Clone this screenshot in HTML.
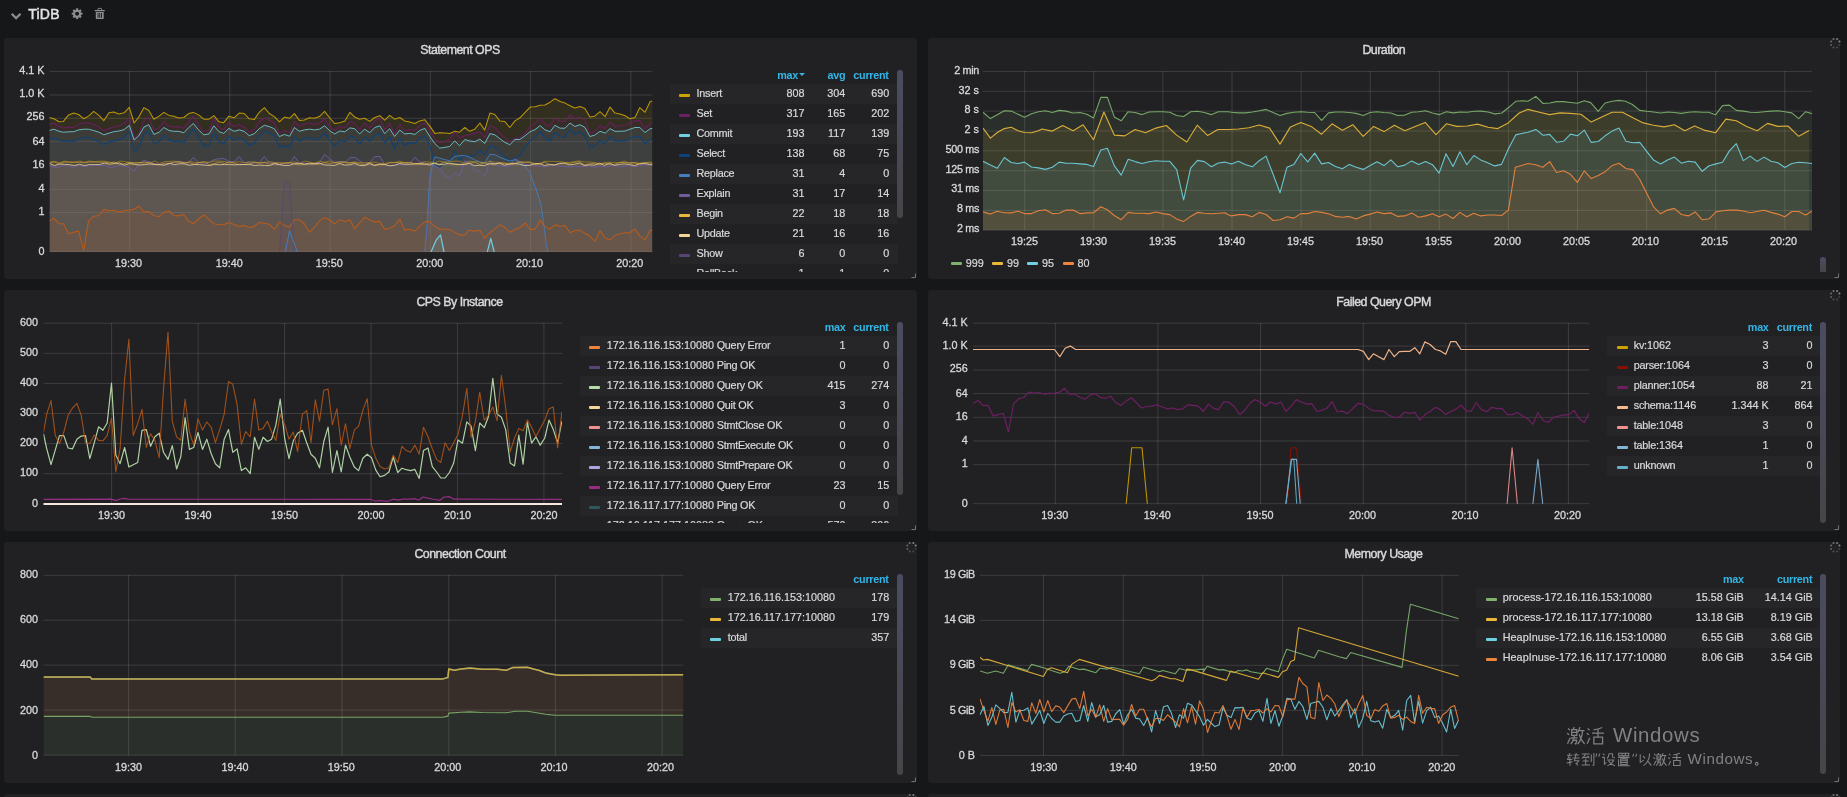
<!DOCTYPE html>
<html><head><meta charset="utf-8"><title>TiDB</title>
<style>
html,body{margin:0;padding:0;background:#161719;}
body{width:1847px;height:797px;overflow:hidden;position:relative;font-family:"Liberation Sans", sans-serif;color:#d8d9da;}
.panel{position:absolute;background:#212124;border-radius:3px;}
#root{position:absolute;left:0;top:0;width:1847px;height:797px;will-change:transform;}
svg.main{position:absolute;left:0;top:0;}
.ax{font-family:"Liberation Sans", sans-serif;font-size:10.8px;fill:#d8d9da;stroke:#d8d9da;stroke-width:0.3px;}
.axl{letter-spacing:-0.33px;}
.ttl{font-family:"Liberation Sans", sans-serif;font-size:12.4px;fill:#d8d9da;letter-spacing:-0.5px;stroke:#d8d9da;stroke-width:0.4px;}
.lh{position:absolute;font-size:10.8px;font-weight:bold;color:#33b5e5;line-height:14px;white-space:nowrap;letter-spacing:-0.28px;}
.caret{display:inline-block;width:0;height:0;border-left:3px solid transparent;border-right:3px solid transparent;border-top:3.5px solid #33b5e5;margin-left:0.5px;vertical-align:3px;}
.lg{position:absolute;overflow:hidden;}
.lr{position:absolute;left:0;right:0;height:20px;font-size:10.8px;line-height:18px;white-space:nowrap;-webkit-text-stroke:0.2px #d8d9da;}
.lr.alt{background:#262628;}
.lr i{position:absolute;top:10px;width:11px;height:3px;border-radius:1px;}
.ll{position:absolute;top:0;letter-spacing:-0.25px;}
.ll b{font-weight:normal;letter-spacing:0;}
.lv{position:absolute;top:0;}
.chip{position:absolute;width:11px;height:3px;border-radius:1px;}
.bl{position:absolute;font-size:10.8px;line-height:18px;white-space:nowrap;-webkit-text-stroke:0.2px #d8d9da;}
.sb{position:absolute;width:5.4px;border-radius:3px;background:linear-gradient(to bottom,#4b4c61,#454549);}
.hdr{position:absolute;left:28.3px;top:5px;font-size:14px;line-height:18px;color:#e3e3e3;letter-spacing:0.2px;-webkit-text-stroke:0.5px #e3e3e3;}
</style></head><body>
<div id="root"><div class="panel" style="left:4px;top:38px;width:913px;height:241px"></div><div class="panel" style="left:928px;top:38px;width:912px;height:241px"></div><div class="panel" style="left:4px;top:290px;width:913px;height:241px"></div><div class="panel" style="left:928px;top:290px;width:912px;height:241px"></div><div class="panel" style="left:4px;top:542px;width:913px;height:241px"></div><div class="panel" style="left:928px;top:542px;width:912px;height:241px"></div><div class="panel" style="left:4px;top:794px;width:913px;height:20px"></div><div class="panel" style="left:928px;top:794px;width:912px;height:20px"></div><svg class="main" width="1847" height="797" viewBox="0 0 1847 797"><path d="M915.5 273.5 v4 h-4" fill="none" stroke="#8e8e8e" stroke-width="1" opacity="0.75"/><path d="M1838.5 273.5 v4 h-4" fill="none" stroke="#8e8e8e" stroke-width="1" opacity="0.75"/><path d="M915.5 525.5 v4 h-4" fill="none" stroke="#8e8e8e" stroke-width="1" opacity="0.75"/><path d="M1838.5 525.5 v4 h-4" fill="none" stroke="#8e8e8e" stroke-width="1" opacity="0.75"/><path d="M915.5 777.5 v4 h-4" fill="none" stroke="#8e8e8e" stroke-width="1" opacity="0.75"/><path d="M1838.5 777.5 v4 h-4" fill="none" stroke="#8e8e8e" stroke-width="1" opacity="0.75"/><circle cx="1837.1" cy="39" r="1" fill="#9a9a9a" opacity="0.79"/><circle cx="1839.5" cy="41.4" r="1" fill="#9a9a9a" opacity="0.88"/><circle cx="1839.5" cy="45" r="1" fill="#9a9a9a" opacity="0.25"/><circle cx="1837.1" cy="47.4" r="1" fill="#9a9a9a" opacity="0.34"/><circle cx="1833.5" cy="47.4" r="1" fill="#9a9a9a" opacity="0.43"/><circle cx="1831.1" cy="45" r="1" fill="#9a9a9a" opacity="0.52"/><circle cx="1831.1" cy="41.4" r="1" fill="#9a9a9a" opacity="0.61"/><circle cx="1833.5" cy="39" r="1" fill="#9a9a9a" opacity="0.70"/><circle cx="1837.1" cy="291" r="1" fill="#9a9a9a" opacity="0.79"/><circle cx="1839.5" cy="293.4" r="1" fill="#9a9a9a" opacity="0.88"/><circle cx="1839.5" cy="297" r="1" fill="#9a9a9a" opacity="0.25"/><circle cx="1837.1" cy="299.4" r="1" fill="#9a9a9a" opacity="0.34"/><circle cx="1833.5" cy="299.4" r="1" fill="#9a9a9a" opacity="0.43"/><circle cx="1831.1" cy="297" r="1" fill="#9a9a9a" opacity="0.52"/><circle cx="1831.1" cy="293.4" r="1" fill="#9a9a9a" opacity="0.61"/><circle cx="1833.5" cy="291" r="1" fill="#9a9a9a" opacity="0.70"/><circle cx="913.3" cy="543" r="1" fill="#9a9a9a" opacity="0.79"/><circle cx="915.7" cy="545.4" r="1" fill="#9a9a9a" opacity="0.88"/><circle cx="915.7" cy="549" r="1" fill="#9a9a9a" opacity="0.25"/><circle cx="913.3" cy="551.4" r="1" fill="#9a9a9a" opacity="0.34"/><circle cx="909.7" cy="551.4" r="1" fill="#9a9a9a" opacity="0.43"/><circle cx="907.3" cy="549" r="1" fill="#9a9a9a" opacity="0.52"/><circle cx="907.3" cy="545.4" r="1" fill="#9a9a9a" opacity="0.61"/><circle cx="909.7" cy="543" r="1" fill="#9a9a9a" opacity="0.70"/><circle cx="1837.1" cy="543" r="1" fill="#9a9a9a" opacity="0.79"/><circle cx="1839.5" cy="545.4" r="1" fill="#9a9a9a" opacity="0.88"/><circle cx="1839.5" cy="549" r="1" fill="#9a9a9a" opacity="0.25"/><circle cx="1837.1" cy="551.4" r="1" fill="#9a9a9a" opacity="0.34"/><circle cx="1833.5" cy="551.4" r="1" fill="#9a9a9a" opacity="0.43"/><circle cx="1831.1" cy="549" r="1" fill="#9a9a9a" opacity="0.52"/><circle cx="1831.1" cy="545.4" r="1" fill="#9a9a9a" opacity="0.61"/><circle cx="1833.5" cy="543" r="1" fill="#9a9a9a" opacity="0.70"/><circle cx="913.3" cy="795" r="1" fill="#9a9a9a" opacity="0.79"/><circle cx="915.7" cy="797.4" r="1" fill="#9a9a9a" opacity="0.88"/><circle cx="915.7" cy="801" r="1" fill="#9a9a9a" opacity="0.25"/><circle cx="913.3" cy="803.4" r="1" fill="#9a9a9a" opacity="0.34"/><circle cx="909.7" cy="803.4" r="1" fill="#9a9a9a" opacity="0.43"/><circle cx="907.3" cy="801" r="1" fill="#9a9a9a" opacity="0.52"/><circle cx="907.3" cy="797.4" r="1" fill="#9a9a9a" opacity="0.61"/><circle cx="909.7" cy="795" r="1" fill="#9a9a9a" opacity="0.70"/><circle cx="1837.1" cy="795" r="1" fill="#9a9a9a" opacity="0.79"/><circle cx="1839.5" cy="797.4" r="1" fill="#9a9a9a" opacity="0.88"/><circle cx="1839.5" cy="801" r="1" fill="#9a9a9a" opacity="0.25"/><circle cx="1837.1" cy="803.4" r="1" fill="#9a9a9a" opacity="0.34"/><circle cx="1833.5" cy="803.4" r="1" fill="#9a9a9a" opacity="0.43"/><circle cx="1831.1" cy="801" r="1" fill="#9a9a9a" opacity="0.52"/><circle cx="1831.1" cy="797.4" r="1" fill="#9a9a9a" opacity="0.61"/><circle cx="1833.5" cy="795" r="1" fill="#9a9a9a" opacity="0.70"/><path d="M11.7 13.8 L16.1 18.2 L20.5 13.8" fill="none" stroke="#8e8e8e" stroke-width="2.3"/><g transform="translate(77.1,13.7)"><circle r="3" fill="none" stroke="#8e8e8e" stroke-width="2.1"/><rect x="-1.05" y="-5.4" width="2.1" height="2" fill="#8e8e8e" transform="rotate(0)"/><rect x="-1.05" y="-5.4" width="2.1" height="2" fill="#8e8e8e" transform="rotate(45)"/><rect x="-1.05" y="-5.4" width="2.1" height="2" fill="#8e8e8e" transform="rotate(90)"/><rect x="-1.05" y="-5.4" width="2.1" height="2" fill="#8e8e8e" transform="rotate(135)"/><rect x="-1.05" y="-5.4" width="2.1" height="2" fill="#8e8e8e" transform="rotate(180)"/><rect x="-1.05" y="-5.4" width="2.1" height="2" fill="#8e8e8e" transform="rotate(225)"/><rect x="-1.05" y="-5.4" width="2.1" height="2" fill="#8e8e8e" transform="rotate(270)"/><rect x="-1.05" y="-5.4" width="2.1" height="2" fill="#8e8e8e" transform="rotate(315)"/></g><g transform="translate(94.7,8)" fill="#8e8e8e"><rect x="0" y="1.9" width="10.1" height="1.4" rx="0.3"/><path d="M3.2 2.2 v-1 q0 -0.8 0.8 -0.8 h2.1 q0.8 0 0.8 0.8 v1" fill="none" stroke="#8e8e8e" stroke-width="1"/><path d="M1.1 3.9 h7.9 v6.3 q0 0.9 -0.9 0.9 h-6.1 q-0.9 0 -0.9 -0.9 z"/><rect x="2.9" y="4.9" width="0.9" height="4.9" fill="#161719"/><rect x="4.6" y="4.9" width="0.9" height="4.9" fill="#161719"/><rect x="6.3" y="4.9" width="0.9" height="4.9" fill="#161719"/></g><defs><clipPath id="c1"><rect x="49.5" y="71" width="603" height="181"/></clipPath></defs><rect x="49.5" y="70.9" width="603" height="1" fill="rgba(200,200,200,0.17)"/><rect x="49.5" y="94.5" width="603" height="1" fill="rgba(200,200,200,0.17)"/><rect x="49.5" y="117.8" width="603" height="1" fill="rgba(200,200,200,0.17)"/><rect x="49.5" y="141.2" width="603" height="1" fill="rgba(200,200,200,0.17)"/><rect x="49.5" y="164.6" width="603" height="1" fill="rgba(200,200,200,0.17)"/><rect x="49.5" y="188.8" width="603" height="1" fill="rgba(200,200,200,0.17)"/><rect x="49.5" y="212" width="603" height="1" fill="rgba(200,200,200,0.17)"/><rect x="49.5" y="251.2" width="603" height="1" fill="rgba(200,200,200,0.17)"/><rect x="129.1" y="71" width="1" height="181" fill="rgba(200,200,200,0.17)"/><rect x="229.3" y="71" width="1" height="181" fill="rgba(200,200,200,0.17)"/><rect x="329.6" y="71" width="1" height="181" fill="rgba(200,200,200,0.17)"/><rect x="429.8" y="71" width="1" height="181" fill="rgba(200,200,200,0.17)"/><rect x="529.9" y="71" width="1" height="181" fill="rgba(200,200,200,0.17)"/><rect x="630.4" y="71" width="1" height="181" fill="rgba(200,200,200,0.17)"/><text x="460" y="54.4" text-anchor="middle" class="ttl">Statement OPS</text><text x="44.5" y="74" text-anchor="end" class="ax">4.1 K</text><text x="44.5" y="96.9" text-anchor="end" class="ax">1.0 K</text><text x="44.5" y="119.9" text-anchor="end" class="ax">256</text><text x="44.5" y="144.9" text-anchor="end" class="ax">64</text><text x="44.5" y="167.8" text-anchor="end" class="ax">16</text><text x="44.5" y="192.2" text-anchor="end" class="ax">4</text><text x="44.5" y="214.8" text-anchor="end" class="ax">1</text><text x="44.5" y="254.9" text-anchor="end" class="ax">0</text><text x="128.4" y="267.2" text-anchor="middle" class="ax">19:30</text><text x="229.2" y="267.2" text-anchor="middle" class="ax">19:40</text><text x="329.3" y="267.2" text-anchor="middle" class="ax">19:50</text><text x="429.8" y="267.2" text-anchor="middle" class="ax">20:00</text><text x="529.6" y="267.2" text-anchor="middle" class="ax">20:10</text><text x="629.7" y="267.2" text-anchor="middle" class="ax">20:20</text><g clip-path="url(#c1)"><polygon points="49.2,117.5 53.9,118.8 59.1,121.8 63.4,121.4 68.6,114.9 73.8,113.1 78.5,114.5 83.7,118.7 88.5,116.1 93.7,111.4 98.9,115.4 103.8,120.6 109,112.8 113.7,111.9 118.9,114 124.1,112.8 129.3,107.4 134.1,123 138.8,117.1 144,107.6 148.8,110.5 153.9,119.2 159.1,116.1 163.9,112.4 169.1,115.4 173.8,116.2 178.6,118 183.8,117.5 188.7,113.6 193.4,112.4 198.6,114.9 203.8,119.2 209,119.2 213.8,115.7 219,121.8 223.7,122.7 228.9,116.2 234.1,117.8 239.3,113.1 244.2,113.5 249.2,118.8 254.4,119.4 259.2,112.3 264.4,107.6 269.3,113.5 274.3,116.6 279.5,121.8 284.4,117.1 289.6,118.3 294.4,113.6 299.4,120.4 304.3,120.1 309.5,117.8 314.4,118.3 319.4,116.6 324.6,111.4 329.4,117.5 334.6,123.5 339.8,122.7 344.9,120.9 349.9,112.3 354.7,117.1 359.6,119.2 364.6,118.3 369.8,121.4 374.7,117.5 379.9,115.7 384.7,120.1 389.7,115.4 394.6,119.2 399.8,117.5 404.6,120.9 409.7,122.1 414.9,123.5 419.7,120.9 424.9,119.7 429.8,126.1 434.8,133.4 439.7,132.7 444.9,133.1 449.7,133.6 454.7,131.3 459.6,132.2 464.8,127.5 469.6,131.3 474.8,129.2 479.9,123 484.7,130.1 489.9,113.1 494.8,114.5 499.8,120.9 504.6,121.4 509.8,127.5 515,120.9 519.9,117.8 525.1,112.3 530.1,107.1 535,106.7 540.2,105.3 545,105 550.1,102.2 554.9,98.7 560.1,101.5 565,103.1 570,105.7 574.8,107.9 580,106.5 584.9,108.4 589.9,116.9 594.8,116.2 600,111.7 605.2,116.6 610,107.1 615,113.1 619.9,114 625.1,115.7 629.9,118.7 635,117.5 639.8,107.6 645,112.3 650.2,101.5 652.5,101 652.5,252 49.2,252" fill="#CCA300" fill-opacity="0.1" stroke="none"/><polygon points="49.2,124.4 53.9,123 59.1,126.5 63.4,127.9 68.6,127.3 73.8,127.5 78.5,124.4 83.7,123 88.5,122.7 93.7,124.4 98.9,127 103.8,130.8 109,128.4 113.7,127 118.9,125.8 124.1,123.5 129.3,117.5 134.1,138.3 138.8,133.9 144,120.6 148.8,117.1 153.9,129.9 159.1,127.9 163.9,121.3 169.1,126.5 173.8,127 178.6,126.6 183.8,128.2 188.7,121.8 193.4,116.1 198.6,125.3 203.8,131.7 209,130.5 213.8,118.3 219,127.5 223.7,129.6 228.9,122.3 234.1,126.5 239.3,124.4 244.2,127 249.2,132.2 254.4,129.6 259.2,121.8 264.4,118.3 269.3,120.1 274.3,122.7 279.5,133.4 284.4,130.5 289.6,132.7 294.4,121.8 299.4,126.1 304.3,124 309.5,123 314.4,124.4 319.4,123 324.6,118.8 329.4,126.1 334.6,130.5 339.8,126.5 344.9,127.5 349.9,121.4 354.7,123 359.6,129.6 364.6,123 369.8,127.9 374.7,120.9 379.9,118.3 384.7,129.6 389.7,123 394.6,133.9 399.8,124 404.6,131 409.7,129.6 414.9,130.1 419.7,125.3 424.9,122.7 429.8,130.5 434.8,138.3 439.7,142.6 444.9,141.4 449.7,139.1 454.7,132.2 459.6,137.7 464.8,135.7 469.6,134.8 474.8,133.1 479.9,131.8 484.7,137.7 489.9,125.8 494.8,127.5 499.8,133.1 504.6,137.4 509.8,141.7 515,138.3 519.9,137.7 525.1,133.1 530.1,126.5 535,123.5 540.2,117.8 545,124.4 550.1,126.1 554.9,118.3 560.1,121.3 565,121.3 570,114.9 574.8,118.8 580,117.1 584.9,120.1 589.9,133.1 594.8,131.3 600,125.6 605.2,128.7 610,121.8 615,126.5 619.9,125.8 625.1,125.3 629.9,122.7 635,120.9 639.8,120.6 645,128.7 650.2,123.5 652.5,122.7 652.5,252 49.2,252" fill="#6D1F62" fill-opacity="0.1" stroke="none"/><polygon points="49.2,130.5 53.9,129.2 59.1,131.3 63.4,132.2 68.6,131.8 73.8,131.7 78.5,129.9 83.7,129.2 88.5,129.2 93.7,130.5 98.9,132.2 103.8,134.8 109,133.1 113.7,131.7 118.9,131 124.1,129.6 129.3,125.3 134.1,140 138.8,135.7 144,127 148.8,124.7 153.9,134.4 159.1,132.2 163.9,127.5 169.1,130.5 173.8,131.3 178.6,131.3 183.8,132.7 188.7,127.5 193.4,123.5 198.6,129.9 203.8,134.8 209,133.9 213.8,125.8 219,131.7 223.7,133.4 228.9,128.4 234.1,131.3 239.3,129.9 244.2,131.3 249.2,135.7 254.4,133.6 259.2,128.7 264.4,125.3 269.3,126.6 274.3,128.7 279.5,136.5 284.4,134.4 289.6,136.2 294.4,127.5 299.4,131.3 304.3,129.9 309.5,129.2 314.4,129.9 319.4,129.2 324.6,125.8 329.4,130.5 334.6,133.9 339.8,131 344.9,131.8 349.9,127.9 354.7,128.7 359.6,133.9 364.6,129.2 369.8,132.7 374.7,127.5 379.9,125.8 384.7,133.6 389.7,128.7 394.6,136.5 399.8,130.1 404.6,133.9 409.7,133.4 414.9,134.4 419.7,130.5 424.9,128.4 429.8,136.5 434.8,143.5 439.7,148.1 444.9,147.4 449.7,146.4 454.7,140.9 459.6,145.7 464.8,139.5 469.6,140.9 474.8,141.7 479.9,139.1 484.7,143.5 489.9,133.6 494.8,134.8 499.8,138.6 504.6,142.2 509.8,144.7 515,139.5 519.9,139.5 525.1,135.7 530.1,131.7 535,129.6 540.2,125.6 545,129.9 550.1,131.7 554.9,125.3 560.1,128.2 565,128.2 570,123 574.8,126.5 580,124.7 584.9,127.3 589.9,136.5 594.8,135.1 600,131.3 605.2,133.1 610,128.7 615,131.3 619.9,131.3 625.1,131 629.9,129.2 635,127.5 639.8,127.5 645,132.5 650.2,128.7 652.5,128.4 652.5,252 49.2,252" fill="#6ED0E0" fill-opacity="0.1" stroke="none"/><polygon points="49.2,138.8 53.9,137.9 59.1,140 63.4,141.4 68.6,140.9 73.8,141.4 78.5,138.8 83.7,137.7 88.5,137.4 93.7,139.5 98.9,141.4 103.8,144.8 109,142.1 113.7,140.9 118.9,139.6 124.1,137.7 129.3,131.3 134.1,152.1 138.8,147.8 144,134.4 148.8,130.5 153.9,143.5 159.1,141.7 163.9,134.8 169.1,140 173.8,141.4 178.6,140.9 183.8,142.6 188.7,134.8 193.4,128.7 198.6,137.7 203.8,146.4 209,145.2 213.8,133.1 219,141.7 223.7,143.8 228.9,136.2 234.1,140.3 239.3,137.7 244.2,140 249.2,145.5 254.4,143.1 259.2,135.7 264.4,131.3 269.3,132.7 274.3,135.7 279.5,147.4 284.4,146.1 289.6,147.8 294.4,136.5 299.4,141.4 304.3,138.6 309.5,137.4 314.4,139.6 319.4,138.3 324.6,133.1 329.4,140 334.6,146.4 339.8,140.3 344.9,142.2 349.9,136 354.7,137.4 359.6,144.3 364.6,137 369.8,141.4 374.7,135.7 379.9,133.1 384.7,143.1 389.7,136.5 394.6,149.2 399.8,138.3 404.6,145.2 409.7,142.6 414.9,143.5 419.7,138.3 424.9,136.2 429.8,145.2 434.8,164.3 439.7,166.9 444.9,162.5 449.7,160.8 454.7,150.9 459.6,160.8 464.8,155.6 469.6,156.5 474.8,155.6 479.9,150.4 484.7,154.7 489.9,146.1 494.8,146.9 499.8,152.1 504.6,156.5 509.8,160.8 515,158.2 519.9,155.6 525.1,147.8 530.1,140.9 535,137.4 540.2,131.3 545,138.3 550.1,140.9 554.9,132.7 560.1,136.2 565,137 570,129.6 574.8,134.4 580,131.7 584.9,136.5 589.9,147.8 594.8,146.1 600,140.3 605.2,143.8 610,136.5 615,140.9 619.9,140.9 625.1,140.9 629.9,138.3 635,136.2 639.8,136.5 645,143.5 650.2,139.5 652.5,139.1 652.5,252 49.2,252" fill="#0A437C" fill-opacity="0.1" stroke="none"/><polygon points="424.9,251.9 427.5,219.3 428.7,193.3 430.1,176 432.7,163.9 434.8,156.9 439.7,158.2 444.9,159.6 449.7,160.8 454.7,156.5 459.6,155.6 464.8,155.6 469.6,157 474.8,159.9 479.9,162 484.7,162.5 489.9,154.4 494.8,154.7 499.8,157.3 504.6,159.1 509.8,161.1 515,159.6 519.9,162.5 525.1,166 530.1,172.9 535,186.8 535.8,188.1 541,204.6 543.6,222.8 546.2,243.6 548,251.9 548,252 424.9,252" fill="#447EBC" fill-opacity="0.1" stroke="none"/><polygon points="49.2,165.5 53.9,167.2 59.1,167.2 63.4,165.1 68.6,166 73.8,167.4 78.5,165.5 83.7,166.5 88.5,166 93.7,165.5 98.9,165.5 103.8,165.1 109,167.2 113.7,167.2 118.9,165.5 124.1,166 129.3,167.4 134.1,171.2 138.8,163.7 144,160.4 148.8,161.7 153.9,163.4 159.1,164.3 163.9,164.3 169.1,163.4 173.8,162.5 178.6,161.1 183.8,162.2 188.7,163 193.4,157.3 198.6,162.5 203.8,163.4 209,162.2 213.8,159.9 219,158.7 223.7,158.5 228.9,161.3 234.1,161.7 239.3,156.5 244.2,163 249.2,161.7 254.4,163 259.2,162.5 264.4,156.5 269.3,163 274.3,162.5 279.5,164.3 284.4,163.9 289.6,163.4 294.4,156.5 299.4,163.4 304.3,163 309.5,164.3 314.4,163.4 319.4,162.5 324.6,154.4 329.4,158.7 334.6,162.2 339.8,161.7 344.9,162.2 349.9,157.8 354.7,157.3 359.6,160.8 364.6,164.3 369.8,162.5 374.7,156.5 379.9,156.5 384.7,164.3 389.7,166 394.6,165.5 399.8,164.3 404.6,164.3 409.7,163.4 414.9,157.3 419.7,161.7 424.9,163 429.8,164.3 434.8,166 439.7,168.6 444.9,175.5 449.7,178.1 454.7,172.9 459.6,175.5 464.8,160.8 469.6,162.5 474.8,170.3 479.9,171.2 484.7,176 489.9,160.8 494.8,164.3 499.8,166 504.6,166.5 509.8,166 515,158.7 519.9,161.7 525.1,164.3 530.1,165.5 535,166 540.2,166 545,166.9 550.1,166 554.9,165.5 560.1,166 565,166.5 570,167.2 574.8,166.5 580,166.9 584.9,166.5 589.9,166 594.8,167.2 600,166.5 605.2,166.9 610,166 615,165.5 619.9,167.2 625.1,166 629.9,165.5 635,166.9 639.8,165.5 645,164.3 650.2,165.5 652.5,166 652.5,252 49.2,252" fill="#705DA0" fill-opacity="0.1" stroke="none"/><polygon points="49.5,163 54.5,162.1 59.5,163.7 64.5,162 69.5,162 74.5,162.4 79.5,162.3 84.5,162.8 89.5,162 94.5,161.8 99.5,162.3 104.5,162.1 109.5,162.9 114.5,161.9 119.5,164.4 124.5,163.6 129.5,162.2 134.5,162.6 139.5,162.8 144.5,162.9 149.5,162.2 154.5,164.3 159.5,164.8 164.5,163.2 169.5,163.3 174.5,162.1 179.5,162.1 184.5,162.8 189.5,162.6 194.5,164.3 199.5,162.3 204.5,161.9 209.5,164.7 214.5,163.4 219.5,162.2 224.5,163.4 229.5,161.9 234.5,163.4 239.5,164.7 244.5,164.4 249.5,163.9 254.5,162.6 259.5,162.9 264.5,162.3 269.5,164.1 274.5,163.4 279.5,164.1 284.5,162.8 289.5,162.5 294.5,164.2 299.5,164.8 304.5,164.4 309.5,164.2 314.5,164.3 319.5,164 324.5,162.5 329.5,163.4 334.5,162.9 339.5,161.9 344.5,161.9 349.5,162.6 354.5,162.6 359.5,163.9 364.5,164.7 369.5,163.1 374.5,164.6 379.5,164.8 384.5,164.7 389.5,162.9 394.5,162.5 399.5,162.5 404.5,162.4 409.5,162.4 414.5,163.7 419.5,164.5 424.5,164.3 429.5,163.2 434.5,163.8 439.5,164.2 444.5,162.1 449.5,163.8 454.5,164.5 459.5,164.1 464.5,164.1 469.5,163.2 474.5,162.3 479.5,164.2 484.5,162.8 489.5,164.2 494.5,164.7 499.5,163 504.5,163 509.5,164.6 514.5,164 519.5,162.3 524.5,162.2 529.5,162.3 534.5,164.5 539.5,164.2 544.5,162.2 549.5,164.3 554.5,164.7 559.5,163.8 564.5,162.9 569.5,163.4 574.5,162.2 579.5,161.8 584.5,164.7 589.5,163.7 594.5,163.4 599.5,164.6 604.5,163.1 609.5,164.4 614.5,164.3 619.5,162.4 624.5,162.6 629.5,162.7 634.5,162.5 639.5,163.6 644.5,162.6 649.5,163.1 652.5,163.3 652.5,252 49.5,252" fill="#E8A060" fill-opacity="0.1" stroke="none"/><polygon points="49.5,163.4 54.5,165.5 59.5,164 64.5,164.3 69.5,164.6 74.5,165.5 79.5,164.2 84.5,165.6 89.5,164.4 94.5,164.5 99.5,164.5 104.5,163.1 109.5,164.2 114.5,163.5 119.5,163 124.5,165.2 129.5,163.5 134.5,164.3 139.5,165 144.5,164.6 149.5,163.9 154.5,164.5 159.5,164.6 164.5,165.2 169.5,163.3 174.5,164.6 179.5,163.7 184.5,163.8 189.5,165.2 194.5,164.4 199.5,164.6 204.5,165.1 209.5,165.6 214.5,164.2 219.5,164.7 224.5,164.4 229.5,164.4 234.5,164.9 239.5,164.3 244.5,164.5 249.5,164.3 254.5,165.6 259.5,165 264.5,165.5 269.5,165.6 274.5,163.7 279.5,164.6 284.5,165.6 289.5,165.4 294.5,163.4 299.5,163.3 304.5,164.2 309.5,163.2 314.5,163.7 319.5,163.2 324.5,164.9 329.5,165.2 334.5,165.5 339.5,163.4 344.5,165 349.5,164.8 354.5,163.4 359.5,165.5 364.5,165.7 369.5,163.6 374.5,165.7 379.5,164.1 384.5,164.4 389.5,165.8 394.5,165.3 399.5,163.5 404.5,164.2 409.5,164.4 414.5,163.9 419.5,163.5 424.5,163.9 429.5,165 434.5,163.1 439.5,164.6 444.5,164.2 449.5,163.1 454.5,163.9 459.5,164.7 464.5,164.4 469.5,163.2 474.5,165.8 479.5,165.2 484.5,165.7 489.5,163.3 494.5,163.7 499.5,163.1 504.5,165.2 509.5,163.8 514.5,163.4 519.5,164.2 524.5,165.6 529.5,165.3 534.5,163.7 539.5,163.4 544.5,165.6 549.5,164.6 554.5,165 559.5,163.3 564.5,163.2 569.5,164.9 574.5,164.2 579.5,163.2 584.5,165.6 589.5,164.8 594.5,165.2 599.5,163.2 604.5,165.4 609.5,163.2 614.5,165.4 619.5,164.3 624.5,163.9 629.5,164.5 634.5,165.6 639.5,163.8 644.5,163.4 649.5,164.5 652.5,164.4 652.5,252 49.5,252" fill="#F4D598" fill-opacity="0.1" stroke="none"/><polygon points="49.2,220.7 53.9,218.5 59.1,223.7 63.4,223.7 68.6,233.7 73.8,232.3 78.5,231.1 83.7,250.2 88.5,221.1 93.7,216.4 98.9,215.5 103.8,209.4 109,210.7 113.7,210.3 118.9,212 124.1,210.7 129.3,210.1 134.1,209.4 138.8,206 144,211.9 148.8,211.5 153.9,215.5 159.1,216.7 163.9,212.4 169.1,211 173.8,215.5 178.6,215.9 183.8,214.5 188.7,221.1 193.4,223.7 198.6,219 203.8,214.6 209,219.3 213.8,223.7 219,224.5 223.7,224.5 228.9,222.4 234.1,224.5 239.3,226.6 244.2,225.4 249.2,227.6 254.4,226.3 259.2,222.4 264.4,223.3 269.3,224.2 274.3,229.2 279.5,221.9 284.4,225.7 289.6,227.1 294.4,219.7 299.4,219.8 304.3,223.7 309.5,232.3 314.4,227.1 319.4,221.1 324.6,217.6 329.4,219.8 334.6,224 339.8,219.7 344.9,221.4 349.9,219.7 354.7,228.9 359.6,222.8 364.6,217.2 369.8,219.7 374.7,221.9 379.9,221.4 384.7,229.2 389.7,228.3 394.6,225.7 399.8,219.3 404.6,230.1 409.7,229.2 414.9,231.1 419.7,226.3 424.9,221.6 429.8,221.6 434.8,226.3 439.7,229.2 444.9,229.2 449.7,229.4 454.7,232.3 459.6,234.9 464.8,234.9 469.6,230.2 474.8,231.1 479.9,230.2 484.7,238 489.9,232.7 494.8,228.9 499.8,224.9 504.6,227.1 509.8,232.3 515,229.4 519.9,227.5 525.1,222.8 530.1,229.4 535,229.4 540.2,220.2 545,226.8 550.1,228.9 554.9,224.9 560.1,226.3 565,225.4 570,232.7 574.8,230.6 580,230.1 584.9,233.2 589.9,236.1 594.8,241.5 600,230.6 605.2,238 610,240.1 615,235.4 619.9,233.7 625.1,232.7 629.9,232.7 635,228.9 639.8,236.1 645,239.8 650.2,230.6 652.5,230.1 652.5,252 49.2,252" fill="#C15C17" fill-opacity="0.1" stroke="none"/><polygon points="49.2,138.8 53.9,137.9 59.1,140 63.4,141.4 68.6,140.9 73.8,141.4 78.5,138.8 83.7,137.7 88.5,137.4 93.7,139.5 98.9,141.4 103.8,144.8 109,142.1 113.7,140.9 118.9,139.6 124.1,137.7 129.3,131.3 134.1,152.1 138.8,147.8 144,134.4 148.8,130.5 153.9,143.5 159.1,141.7 163.9,134.8 169.1,140 173.8,141.4 178.6,140.9 183.8,142.6 188.7,134.8 193.4,128.7 198.6,137.7 203.8,146.4 209,145.2 213.8,133.1 219,141.7 223.7,143.8 228.9,136.2 234.1,140.3 239.3,137.7 244.2,140 249.2,145.5 254.4,143.1 259.2,135.7 264.4,131.3 269.3,132.7 274.3,135.7 279.5,147.4 284.4,146.1 289.6,147.8 294.4,136.5 299.4,141.4 304.3,138.6 309.5,137.4 314.4,139.6 319.4,138.3 324.6,133.1 329.4,140 334.6,146.4 339.8,140.3 344.9,142.2 349.9,136 354.7,137.4 359.6,144.3 364.6,137 369.8,141.4 374.7,135.7 379.9,133.1 384.7,143.1 389.7,136.5 394.6,149.2 399.8,138.3 404.6,145.2 409.7,142.6 414.9,143.5 419.7,138.3 424.9,136.2 429.8,145.2 434.8,164.3 439.7,166.9 444.9,162.5 449.7,160.8 454.7,150.9 459.6,160.8 464.8,155.6 469.6,156.5 474.8,155.6 479.9,150.4 484.7,154.7 489.9,146.1 494.8,146.9 499.8,152.1 504.6,156.5 509.8,160.8 515,158.2 519.9,155.6 525.1,147.8 530.1,140.9 535,137.4 540.2,131.3 545,138.3 550.1,140.9 554.9,132.7 560.1,136.2 565,137 570,129.6 574.8,134.4 580,131.7 584.9,136.5 589.9,147.8 594.8,146.1 600,140.3 605.2,143.8 610,136.5 615,140.9 619.9,140.9 625.1,140.9 629.9,138.3 635,136.2 639.8,136.5 645,143.5 650.2,139.5 652.5,139.1 652.5,163.3 649.5,163.1 644.5,162.6 639.5,163.6 634.5,162.5 629.5,162.7 624.5,162.6 619.5,162.4 614.5,164.3 609.5,164.4 604.5,163.1 599.5,164.6 594.5,163.4 589.5,163.7 584.5,164.7 579.5,161.8 574.5,162.2 569.5,163.4 564.5,162.9 559.5,163.8 554.5,164.7 549.5,164.3 544.5,162.2 539.5,164.2 534.5,164.5 529.5,162.3 524.5,162.2 519.5,162.3 514.5,164 509.5,164.6 504.5,163 499.5,163 494.5,164.7 489.5,164.2 484.5,162.8 479.5,164.2 474.5,162.3 469.5,163.2 464.5,164.1 459.5,164.1 454.5,164.5 449.5,163.8 444.5,162.1 439.5,164.2 434.5,163.8 429.5,163.2 424.5,164.3 419.5,164.5 414.5,163.7 409.5,162.4 404.5,162.4 399.5,162.5 394.5,162.5 389.5,162.9 384.5,164.7 379.5,164.8 374.5,164.6 369.5,163.1 364.5,164.7 359.5,163.9 354.5,162.6 349.5,162.6 344.5,161.9 339.5,161.9 334.5,162.9 329.5,163.4 324.5,162.5 319.5,164 314.5,164.3 309.5,164.2 304.5,164.4 299.5,164.8 294.5,164.2 289.5,162.5 284.5,162.8 279.5,164.1 274.5,163.4 269.5,164.1 264.5,162.3 259.5,162.9 254.5,162.6 249.5,163.9 244.5,164.4 239.5,164.7 234.5,163.4 229.5,161.9 224.5,163.4 219.5,162.2 214.5,163.4 209.5,164.7 204.5,161.9 199.5,162.3 194.5,164.3 189.5,162.6 184.5,162.8 179.5,162.1 174.5,162.1 169.5,163.3 164.5,163.2 159.5,164.8 154.5,164.3 149.5,162.2 144.5,162.9 139.5,162.8 134.5,162.6 129.5,162.2 124.5,163.6 119.5,164.4 114.5,161.9 109.5,162.9 104.5,162.1 99.5,162.3 94.5,161.8 89.5,162 84.5,162.8 79.5,162.3 74.5,162.4 69.5,162 64.5,162 59.5,163.7 54.5,162.1 49.5,163" fill="#ff8c50" fill-opacity="0.035"/><polygon points="279.5,251.9 284.4,182.4 289.6,182.4 294.4,251.9 294.4,252 279.5,252" fill="#584477" fill-opacity="0.1" stroke="none"/><polygon points="285.2,251.9 289.6,230.6 297.4,251.9 297.4,252 285.2,252" fill="#447EBC" fill-opacity="0.1" stroke="none"/><polygon points="431,251.9 436.2,240.1 440.5,234.9 444,251.9 444,252 431,252" fill="#6ED0E0" fill-opacity="0.1" stroke="none"/><polygon points="487.3,251.9 490.8,238.4 494.2,251.9 494.2,252 487.3,252" fill="#6ED0E0" fill-opacity="0.1" stroke="none"/><polyline points="49.2,117.5 53.9,118.8 59.1,121.8 63.4,121.4 68.6,114.9 73.8,113.1 78.5,114.5 83.7,118.7 88.5,116.1 93.7,111.4 98.9,115.4 103.8,120.6 109,112.8 113.7,111.9 118.9,114 124.1,112.8 129.3,107.4 134.1,123 138.8,117.1 144,107.6 148.8,110.5 153.9,119.2 159.1,116.1 163.9,112.4 169.1,115.4 173.8,116.2 178.6,118 183.8,117.5 188.7,113.6 193.4,112.4 198.6,114.9 203.8,119.2 209,119.2 213.8,115.7 219,121.8 223.7,122.7 228.9,116.2 234.1,117.8 239.3,113.1 244.2,113.5 249.2,118.8 254.4,119.4 259.2,112.3 264.4,107.6 269.3,113.5 274.3,116.6 279.5,121.8 284.4,117.1 289.6,118.3 294.4,113.6 299.4,120.4 304.3,120.1 309.5,117.8 314.4,118.3 319.4,116.6 324.6,111.4 329.4,117.5 334.6,123.5 339.8,122.7 344.9,120.9 349.9,112.3 354.7,117.1 359.6,119.2 364.6,118.3 369.8,121.4 374.7,117.5 379.9,115.7 384.7,120.1 389.7,115.4 394.6,119.2 399.8,117.5 404.6,120.9 409.7,122.1 414.9,123.5 419.7,120.9 424.9,119.7 429.8,126.1 434.8,133.4 439.7,132.7 444.9,133.1 449.7,133.6 454.7,131.3 459.6,132.2 464.8,127.5 469.6,131.3 474.8,129.2 479.9,123 484.7,130.1 489.9,113.1 494.8,114.5 499.8,120.9 504.6,121.4 509.8,127.5 515,120.9 519.9,117.8 525.1,112.3 530.1,107.1 535,106.7 540.2,105.3 545,105 550.1,102.2 554.9,98.7 560.1,101.5 565,103.1 570,105.7 574.8,107.9 580,106.5 584.9,108.4 589.9,116.9 594.8,116.2 600,111.7 605.2,116.6 610,107.1 615,113.1 619.9,114 625.1,115.7 629.9,118.7 635,117.5 639.8,107.6 645,112.3 650.2,101.5 652.5,101" fill="none" stroke="#CCA300" stroke-width="1.05" stroke-linejoin="round" opacity="0.9"/><polyline points="49.2,124.4 53.9,123 59.1,126.5 63.4,127.9 68.6,127.3 73.8,127.5 78.5,124.4 83.7,123 88.5,122.7 93.7,124.4 98.9,127 103.8,130.8 109,128.4 113.7,127 118.9,125.8 124.1,123.5 129.3,117.5 134.1,138.3 138.8,133.9 144,120.6 148.8,117.1 153.9,129.9 159.1,127.9 163.9,121.3 169.1,126.5 173.8,127 178.6,126.6 183.8,128.2 188.7,121.8 193.4,116.1 198.6,125.3 203.8,131.7 209,130.5 213.8,118.3 219,127.5 223.7,129.6 228.9,122.3 234.1,126.5 239.3,124.4 244.2,127 249.2,132.2 254.4,129.6 259.2,121.8 264.4,118.3 269.3,120.1 274.3,122.7 279.5,133.4 284.4,130.5 289.6,132.7 294.4,121.8 299.4,126.1 304.3,124 309.5,123 314.4,124.4 319.4,123 324.6,118.8 329.4,126.1 334.6,130.5 339.8,126.5 344.9,127.5 349.9,121.4 354.7,123 359.6,129.6 364.6,123 369.8,127.9 374.7,120.9 379.9,118.3 384.7,129.6 389.7,123 394.6,133.9 399.8,124 404.6,131 409.7,129.6 414.9,130.1 419.7,125.3 424.9,122.7 429.8,130.5 434.8,138.3 439.7,142.6 444.9,141.4 449.7,139.1 454.7,132.2 459.6,137.7 464.8,135.7 469.6,134.8 474.8,133.1 479.9,131.8 484.7,137.7 489.9,125.8 494.8,127.5 499.8,133.1 504.6,137.4 509.8,141.7 515,138.3 519.9,137.7 525.1,133.1 530.1,126.5 535,123.5 540.2,117.8 545,124.4 550.1,126.1 554.9,118.3 560.1,121.3 565,121.3 570,114.9 574.8,118.8 580,117.1 584.9,120.1 589.9,133.1 594.8,131.3 600,125.6 605.2,128.7 610,121.8 615,126.5 619.9,125.8 625.1,125.3 629.9,122.7 635,120.9 639.8,120.6 645,128.7 650.2,123.5 652.5,122.7" fill="none" stroke="#6D1F62" stroke-width="1.1" stroke-linejoin="round" opacity="0.9"/><polyline points="49.2,130.5 53.9,129.2 59.1,131.3 63.4,132.2 68.6,131.8 73.8,131.7 78.5,129.9 83.7,129.2 88.5,129.2 93.7,130.5 98.9,132.2 103.8,134.8 109,133.1 113.7,131.7 118.9,131 124.1,129.6 129.3,125.3 134.1,140 138.8,135.7 144,127 148.8,124.7 153.9,134.4 159.1,132.2 163.9,127.5 169.1,130.5 173.8,131.3 178.6,131.3 183.8,132.7 188.7,127.5 193.4,123.5 198.6,129.9 203.8,134.8 209,133.9 213.8,125.8 219,131.7 223.7,133.4 228.9,128.4 234.1,131.3 239.3,129.9 244.2,131.3 249.2,135.7 254.4,133.6 259.2,128.7 264.4,125.3 269.3,126.6 274.3,128.7 279.5,136.5 284.4,134.4 289.6,136.2 294.4,127.5 299.4,131.3 304.3,129.9 309.5,129.2 314.4,129.9 319.4,129.2 324.6,125.8 329.4,130.5 334.6,133.9 339.8,131 344.9,131.8 349.9,127.9 354.7,128.7 359.6,133.9 364.6,129.2 369.8,132.7 374.7,127.5 379.9,125.8 384.7,133.6 389.7,128.7 394.6,136.5 399.8,130.1 404.6,133.9 409.7,133.4 414.9,134.4 419.7,130.5 424.9,128.4 429.8,136.5 434.8,143.5 439.7,148.1 444.9,147.4 449.7,146.4 454.7,140.9 459.6,145.7 464.8,139.5 469.6,140.9 474.8,141.7 479.9,139.1 484.7,143.5 489.9,133.6 494.8,134.8 499.8,138.6 504.6,142.2 509.8,144.7 515,139.5 519.9,139.5 525.1,135.7 530.1,131.7 535,129.6 540.2,125.6 545,129.9 550.1,131.7 554.9,125.3 560.1,128.2 565,128.2 570,123 574.8,126.5 580,124.7 584.9,127.3 589.9,136.5 594.8,135.1 600,131.3 605.2,133.1 610,128.7 615,131.3 619.9,131.3 625.1,131 629.9,129.2 635,127.5 639.8,127.5 645,132.5 650.2,128.7 652.5,128.4" fill="none" stroke="#6ED0E0" stroke-width="0.95" stroke-linejoin="round" opacity="0.9"/><polyline points="49.2,138.8 53.9,137.9 59.1,140 63.4,141.4 68.6,140.9 73.8,141.4 78.5,138.8 83.7,137.7 88.5,137.4 93.7,139.5 98.9,141.4 103.8,144.8 109,142.1 113.7,140.9 118.9,139.6 124.1,137.7 129.3,131.3 134.1,152.1 138.8,147.8 144,134.4 148.8,130.5 153.9,143.5 159.1,141.7 163.9,134.8 169.1,140 173.8,141.4 178.6,140.9 183.8,142.6 188.7,134.8 193.4,128.7 198.6,137.7 203.8,146.4 209,145.2 213.8,133.1 219,141.7 223.7,143.8 228.9,136.2 234.1,140.3 239.3,137.7 244.2,140 249.2,145.5 254.4,143.1 259.2,135.7 264.4,131.3 269.3,132.7 274.3,135.7 279.5,147.4 284.4,146.1 289.6,147.8 294.4,136.5 299.4,141.4 304.3,138.6 309.5,137.4 314.4,139.6 319.4,138.3 324.6,133.1 329.4,140 334.6,146.4 339.8,140.3 344.9,142.2 349.9,136 354.7,137.4 359.6,144.3 364.6,137 369.8,141.4 374.7,135.7 379.9,133.1 384.7,143.1 389.7,136.5 394.6,149.2 399.8,138.3 404.6,145.2 409.7,142.6 414.9,143.5 419.7,138.3 424.9,136.2 429.8,145.2 434.8,164.3 439.7,166.9 444.9,162.5 449.7,160.8 454.7,150.9 459.6,160.8 464.8,155.6 469.6,156.5 474.8,155.6 479.9,150.4 484.7,154.7 489.9,146.1 494.8,146.9 499.8,152.1 504.6,156.5 509.8,160.8 515,158.2 519.9,155.6 525.1,147.8 530.1,140.9 535,137.4 540.2,131.3 545,138.3 550.1,140.9 554.9,132.7 560.1,136.2 565,137 570,129.6 574.8,134.4 580,131.7 584.9,136.5 589.9,147.8 594.8,146.1 600,140.3 605.2,143.8 610,136.5 615,140.9 619.9,140.9 625.1,140.9 629.9,138.3 635,136.2 639.8,136.5 645,143.5 650.2,139.5 652.5,139.1" fill="none" stroke="#0A437C" stroke-width="1.15" stroke-linejoin="round" opacity="0.9"/><polyline points="424.9,251.9 427.5,219.3 428.7,193.3 430.1,176 432.7,163.9 434.8,156.9 439.7,158.2 444.9,159.6 449.7,160.8 454.7,156.5 459.6,155.6 464.8,155.6 469.6,157 474.8,159.9 479.9,162 484.7,162.5 489.9,154.4 494.8,154.7 499.8,157.3 504.6,159.1 509.8,161.1 515,159.6 519.9,162.5 525.1,166 530.1,172.9 535,186.8 535.8,188.1 541,204.6 543.6,222.8 546.2,243.6 548,251.9" fill="none" stroke="#447EBC" stroke-width="1.0" stroke-linejoin="round" opacity="0.9"/><polyline points="49.2,165.5 53.9,167.2 59.1,167.2 63.4,165.1 68.6,166 73.8,167.4 78.5,165.5 83.7,166.5 88.5,166 93.7,165.5 98.9,165.5 103.8,165.1 109,167.2 113.7,167.2 118.9,165.5 124.1,166 129.3,167.4 134.1,171.2 138.8,163.7 144,160.4 148.8,161.7 153.9,163.4 159.1,164.3 163.9,164.3 169.1,163.4 173.8,162.5 178.6,161.1 183.8,162.2 188.7,163 193.4,157.3 198.6,162.5 203.8,163.4 209,162.2 213.8,159.9 219,158.7 223.7,158.5 228.9,161.3 234.1,161.7 239.3,156.5 244.2,163 249.2,161.7 254.4,163 259.2,162.5 264.4,156.5 269.3,163 274.3,162.5 279.5,164.3 284.4,163.9 289.6,163.4 294.4,156.5 299.4,163.4 304.3,163 309.5,164.3 314.4,163.4 319.4,162.5 324.6,154.4 329.4,158.7 334.6,162.2 339.8,161.7 344.9,162.2 349.9,157.8 354.7,157.3 359.6,160.8 364.6,164.3 369.8,162.5 374.7,156.5 379.9,156.5 384.7,164.3 389.7,166 394.6,165.5 399.8,164.3 404.6,164.3 409.7,163.4 414.9,157.3 419.7,161.7 424.9,163 429.8,164.3 434.8,166 439.7,168.6 444.9,175.5 449.7,178.1 454.7,172.9 459.6,175.5 464.8,160.8 469.6,162.5 474.8,170.3 479.9,171.2 484.7,176 489.9,160.8 494.8,164.3 499.8,166 504.6,166.5 509.8,166 515,158.7 519.9,161.7 525.1,164.3 530.1,165.5 535,166 540.2,166 545,166.9 550.1,166 554.9,165.5 560.1,166 565,166.5 570,167.2 574.8,166.5 580,166.9 584.9,166.5 589.9,166 594.8,167.2 600,166.5 605.2,166.9 610,166 615,165.5 619.9,167.2 625.1,166 629.9,165.5 635,166.9 639.8,165.5 645,164.3 650.2,165.5 652.5,166" fill="none" stroke="#705DA0" stroke-width="1.0" stroke-linejoin="round" opacity="0.9"/><polyline points="49.5,161.8 54.5,161.3 59.5,162.7 64.5,161.1 69.5,162.4 74.5,161.9 79.5,161.1 84.5,162.3 89.5,161 94.5,162.1 99.5,161.1 104.5,161.2 109.5,162.1 114.5,163.2 119.5,161.2 124.5,161.5 129.5,162.7 134.5,163.6 139.5,162.5 144.5,162 149.5,163.6 154.5,161 159.5,163.3 164.5,161.7 169.5,161.3 174.5,161.2 179.5,161.8 184.5,163.2 189.5,161.4 194.5,162.5 199.5,162.7 204.5,161.9 209.5,162.4 214.5,161.1 219.5,161.1 224.5,161.5 229.5,162.8 234.5,162.1 239.5,161.8 244.5,162.5 249.5,162.2 254.5,161.7 259.5,163.1 264.5,162.9 269.5,161.6 274.5,162.5 279.5,162.4 284.5,163.4 289.5,162.9 294.5,161.7 299.5,163.6 304.5,161.2 309.5,162.1 314.5,163 319.5,161.3 324.5,162.3 329.5,161 334.5,162.8 339.5,163 344.5,162.5 349.5,163.4 354.5,161.8 359.5,162.8 364.5,162.6 369.5,162.5 374.5,162.2 379.5,163.3 384.5,163.5 389.5,162.2 394.5,162.8 399.5,161.1 404.5,162.9 409.5,162.7 414.5,163.7 419.5,163.2 424.5,161.7 429.5,162 434.5,162.8 439.5,161 444.5,162.2 449.5,161.4 454.5,161.2 459.5,161.1 464.5,163.1 469.5,161.3 474.5,161.6 479.5,162 484.5,163.3 489.5,161.1 494.5,162.2 499.5,162.4 504.5,163.4 509.5,163.2 514.5,163.3 519.5,161.7 524.5,162.1 529.5,161.9 534.5,163.4 539.5,163.6 544.5,161.3 549.5,161.4 554.5,161.5 559.5,161.6 564.5,162.3 569.5,162.5 574.5,161.6 579.5,160.9 584.5,162.1 589.5,161.9 594.5,162.5 599.5,163.6 604.5,162.8 609.5,162.3 614.5,162.6 619.5,162.8 624.5,161.1 629.5,163.4 634.5,163.1 639.5,163.3 644.5,163.1 649.5,162 652.5,162.3" fill="none" stroke="#E5AC0E" stroke-width="0.6" stroke-linejoin="round" opacity="0.8"/><polyline points="49.5,163 54.5,162.1 59.5,163.7 64.5,162 69.5,162 74.5,162.4 79.5,162.3 84.5,162.8 89.5,162 94.5,161.8 99.5,162.3 104.5,162.1 109.5,162.9 114.5,161.9 119.5,164.4 124.5,163.6 129.5,162.2 134.5,162.6 139.5,162.8 144.5,162.9 149.5,162.2 154.5,164.3 159.5,164.8 164.5,163.2 169.5,163.3 174.5,162.1 179.5,162.1 184.5,162.8 189.5,162.6 194.5,164.3 199.5,162.3 204.5,161.9 209.5,164.7 214.5,163.4 219.5,162.2 224.5,163.4 229.5,161.9 234.5,163.4 239.5,164.7 244.5,164.4 249.5,163.9 254.5,162.6 259.5,162.9 264.5,162.3 269.5,164.1 274.5,163.4 279.5,164.1 284.5,162.8 289.5,162.5 294.5,164.2 299.5,164.8 304.5,164.4 309.5,164.2 314.5,164.3 319.5,164 324.5,162.5 329.5,163.4 334.5,162.9 339.5,161.9 344.5,161.9 349.5,162.6 354.5,162.6 359.5,163.9 364.5,164.7 369.5,163.1 374.5,164.6 379.5,164.8 384.5,164.7 389.5,162.9 394.5,162.5 399.5,162.5 404.5,162.4 409.5,162.4 414.5,163.7 419.5,164.5 424.5,164.3 429.5,163.2 434.5,163.8 439.5,164.2 444.5,162.1 449.5,163.8 454.5,164.5 459.5,164.1 464.5,164.1 469.5,163.2 474.5,162.3 479.5,164.2 484.5,162.8 489.5,164.2 494.5,164.7 499.5,163 504.5,163 509.5,164.6 514.5,164 519.5,162.3 524.5,162.2 529.5,162.3 534.5,164.5 539.5,164.2 544.5,162.2 549.5,164.3 554.5,164.7 559.5,163.8 564.5,162.9 569.5,163.4 574.5,162.2 579.5,161.8 584.5,164.7 589.5,163.7 594.5,163.4 599.5,164.6 604.5,163.1 609.5,164.4 614.5,164.3 619.5,162.4 624.5,162.6 629.5,162.7 634.5,162.5 639.5,163.6 644.5,162.6 649.5,163.1 652.5,163.3" fill="none" stroke="#EAB839" stroke-width="0.7" stroke-linejoin="round" opacity="0.8"/><polyline points="49.5,163.4 54.5,165.5 59.5,164 64.5,164.3 69.5,164.6 74.5,165.5 79.5,164.2 84.5,165.6 89.5,164.4 94.5,164.5 99.5,164.5 104.5,163.1 109.5,164.2 114.5,163.5 119.5,163 124.5,165.2 129.5,163.5 134.5,164.3 139.5,165 144.5,164.6 149.5,163.9 154.5,164.5 159.5,164.6 164.5,165.2 169.5,163.3 174.5,164.6 179.5,163.7 184.5,163.8 189.5,165.2 194.5,164.4 199.5,164.6 204.5,165.1 209.5,165.6 214.5,164.2 219.5,164.7 224.5,164.4 229.5,164.4 234.5,164.9 239.5,164.3 244.5,164.5 249.5,164.3 254.5,165.6 259.5,165 264.5,165.5 269.5,165.6 274.5,163.7 279.5,164.6 284.5,165.6 289.5,165.4 294.5,163.4 299.5,163.3 304.5,164.2 309.5,163.2 314.5,163.7 319.5,163.2 324.5,164.9 329.5,165.2 334.5,165.5 339.5,163.4 344.5,165 349.5,164.8 354.5,163.4 359.5,165.5 364.5,165.7 369.5,163.6 374.5,165.7 379.5,164.1 384.5,164.4 389.5,165.8 394.5,165.3 399.5,163.5 404.5,164.2 409.5,164.4 414.5,163.9 419.5,163.5 424.5,163.9 429.5,165 434.5,163.1 439.5,164.6 444.5,164.2 449.5,163.1 454.5,163.9 459.5,164.7 464.5,164.4 469.5,163.2 474.5,165.8 479.5,165.2 484.5,165.7 489.5,163.3 494.5,163.7 499.5,163.1 504.5,165.2 509.5,163.8 514.5,163.4 519.5,164.2 524.5,165.6 529.5,165.3 534.5,163.7 539.5,163.4 544.5,165.6 549.5,164.6 554.5,165 559.5,163.3 564.5,163.2 569.5,164.9 574.5,164.2 579.5,163.2 584.5,165.6 589.5,164.8 594.5,165.2 599.5,163.2 604.5,165.4 609.5,163.2 614.5,165.4 619.5,164.3 624.5,163.9 629.5,164.5 634.5,165.6 639.5,163.8 644.5,163.4 649.5,164.5 652.5,164.4" fill="none" stroke="#F4D598" stroke-width="0.85" stroke-linejoin="round" opacity="0.9"/><polyline points="49.2,220.7 53.9,218.5 59.1,223.7 63.4,223.7 68.6,233.7 73.8,232.3 78.5,231.1 83.7,250.2 88.5,221.1 93.7,216.4 98.9,215.5 103.8,209.4 109,210.7 113.7,210.3 118.9,212 124.1,210.7 129.3,210.1 134.1,209.4 138.8,206 144,211.9 148.8,211.5 153.9,215.5 159.1,216.7 163.9,212.4 169.1,211 173.8,215.5 178.6,215.9 183.8,214.5 188.7,221.1 193.4,223.7 198.6,219 203.8,214.6 209,219.3 213.8,223.7 219,224.5 223.7,224.5 228.9,222.4 234.1,224.5 239.3,226.6 244.2,225.4 249.2,227.6 254.4,226.3 259.2,222.4 264.4,223.3 269.3,224.2 274.3,229.2 279.5,221.9 284.4,225.7 289.6,227.1 294.4,219.7 299.4,219.8 304.3,223.7 309.5,232.3 314.4,227.1 319.4,221.1 324.6,217.6 329.4,219.8 334.6,224 339.8,219.7 344.9,221.4 349.9,219.7 354.7,228.9 359.6,222.8 364.6,217.2 369.8,219.7 374.7,221.9 379.9,221.4 384.7,229.2 389.7,228.3 394.6,225.7 399.8,219.3 404.6,230.1 409.7,229.2 414.9,231.1 419.7,226.3 424.9,221.6 429.8,221.6 434.8,226.3 439.7,229.2 444.9,229.2 449.7,229.4 454.7,232.3 459.6,234.9 464.8,234.9 469.6,230.2 474.8,231.1 479.9,230.2 484.7,238 489.9,232.7 494.8,228.9 499.8,224.9 504.6,227.1 509.8,232.3 515,229.4 519.9,227.5 525.1,222.8 530.1,229.4 535,229.4 540.2,220.2 545,226.8 550.1,228.9 554.9,224.9 560.1,226.3 565,225.4 570,232.7 574.8,230.6 580,230.1 584.9,233.2 589.9,236.1 594.8,241.5 600,230.6 605.2,238 610,240.1 615,235.4 619.9,233.7 625.1,232.7 629.9,232.7 635,228.9 639.8,236.1 645,239.8 650.2,230.6 652.5,230.1" fill="none" stroke="#C15C17" stroke-width="1.1" stroke-linejoin="round" opacity="0.9"/><polyline points="424.9,251.9 426.7,233.2 428.7,207.2 430.1,182.9 431.9,169.1" fill="none" stroke="#705DA0" stroke-width="1" stroke-linejoin="round" opacity="0.55"/><polyline points="279.5,251.9 284.4,182.4 289.6,182.4 294.4,251.9" fill="none" stroke="#584477" stroke-width="1" stroke-linejoin="round" opacity="0.6"/><polyline points="285.2,251.9 289.6,230.6 297.4,251.9" fill="none" stroke="#447EBC" stroke-width="1" stroke-linejoin="round" opacity="1"/><polyline points="431,251.9 436.2,240.1 440.5,234.9 444,251.9" fill="none" stroke="#6ED0E0" stroke-width="1.2" stroke-linejoin="round" opacity="1"/><polyline points="487.3,251.9 490.8,238.4 494.2,251.9" fill="none" stroke="#6ED0E0" stroke-width="1.2" stroke-linejoin="round" opacity="1"/></g><defs><clipPath id="c2"><rect x="983" y="71" width="829" height="159"/></clipPath></defs><rect x="983" y="70.9" width="829" height="1" fill="rgba(200,200,200,0.17)"/><rect x="983" y="90.8" width="829" height="1" fill="rgba(200,200,200,0.17)"/><rect x="983" y="110.6" width="829" height="1" fill="rgba(200,200,200,0.17)"/><rect x="983" y="130.5" width="829" height="1" fill="rgba(200,200,200,0.17)"/><rect x="983" y="150.3" width="829" height="1" fill="rgba(200,200,200,0.17)"/><rect x="983" y="170.2" width="829" height="1" fill="rgba(200,200,200,0.17)"/><rect x="983" y="190" width="829" height="1" fill="rgba(200,200,200,0.17)"/><rect x="983" y="209.9" width="829" height="1" fill="rgba(200,200,200,0.17)"/><rect x="983" y="229.7" width="829" height="1" fill="rgba(200,200,200,0.17)"/><rect x="1024.2" y="71" width="1" height="159" fill="rgba(200,200,200,0.17)"/><rect x="1093.3" y="71" width="1" height="159" fill="rgba(200,200,200,0.17)"/><rect x="1162.4" y="71" width="1" height="159" fill="rgba(200,200,200,0.17)"/><rect x="1231.5" y="71" width="1" height="159" fill="rgba(200,200,200,0.17)"/><rect x="1300.6" y="71" width="1" height="159" fill="rgba(200,200,200,0.17)"/><rect x="1369.7" y="71" width="1" height="159" fill="rgba(200,200,200,0.17)"/><rect x="1438.8" y="71" width="1" height="159" fill="rgba(200,200,200,0.17)"/><rect x="1507.9" y="71" width="1" height="159" fill="rgba(200,200,200,0.17)"/><rect x="1577" y="71" width="1" height="159" fill="rgba(200,200,200,0.17)"/><rect x="1646.1" y="71" width="1" height="159" fill="rgba(200,200,200,0.17)"/><rect x="1715.2" y="71" width="1" height="159" fill="rgba(200,200,200,0.17)"/><rect x="1784.3" y="71" width="1" height="159" fill="rgba(200,200,200,0.17)"/><text x="1383.8" y="54.4" text-anchor="middle" class="ttl">Duration</text><text x="979" y="74" text-anchor="end" class="ax axl">2 min</text><text x="979" y="93.5" text-anchor="end" class="ax">32 s</text><text x="979" y="113.1" text-anchor="end" class="ax">8 s</text><text x="979" y="133" text-anchor="end" class="ax">2 s</text><text x="979" y="152.9" text-anchor="end" class="ax axl">500 ms</text><text x="979" y="172.8" text-anchor="end" class="ax axl">125 ms</text><text x="979" y="192.4" text-anchor="end" class="ax axl">31 ms</text><text x="979" y="212.2" text-anchor="end" class="ax axl">8 ms</text><text x="979" y="232" text-anchor="end" class="ax axl">2 ms</text><text x="1024.6" y="245.2" text-anchor="middle" class="ax">19:25</text><text x="1093.6" y="245.2" text-anchor="middle" class="ax">19:30</text><text x="1162.6" y="245.2" text-anchor="middle" class="ax">19:35</text><text x="1231.5" y="245.2" text-anchor="middle" class="ax">19:40</text><text x="1300.5" y="245.2" text-anchor="middle" class="ax">19:45</text><text x="1369.5" y="245.2" text-anchor="middle" class="ax">19:50</text><text x="1438.5" y="245.2" text-anchor="middle" class="ax">19:55</text><text x="1507.5" y="245.2" text-anchor="middle" class="ax">20:00</text><text x="1576.4" y="245.2" text-anchor="middle" class="ax">20:05</text><text x="1645.4" y="245.2" text-anchor="middle" class="ax">20:10</text><text x="1714.4" y="245.2" text-anchor="middle" class="ax">20:15</text><text x="1783.4" y="245.2" text-anchor="middle" class="ax">20:20</text><g clip-path="url(#c2)"><polygon points="983,112.2 990.4,118.6 997.3,114.8 1004.3,110.8 1011.2,111.1 1018.1,114.3 1024.5,117.2 1031.5,113.7 1038.4,111.7 1045.3,110.8 1052.3,112.5 1059.2,110.4 1066.1,111.1 1073.1,113 1080,112.5 1086.9,114.3 1093.5,118.1 1100.8,97.4 1107.4,97.4 1114.3,116.9 1121.2,120.8 1128.2,111.7 1135.1,112.5 1142,114.6 1149,112 1155.9,111.7 1162.8,111.7 1169.8,112.2 1176.7,115.5 1183.6,116.5 1190.6,111.7 1197.5,111.3 1204.4,112.5 1211.4,114.6 1218.3,111.7 1225.2,111.7 1228,111.7 1231.5,112.2 1238.4,112.9 1245.3,112.9 1252.3,112 1259.2,110.8 1266.1,109.4 1273.1,112.5 1280,115.5 1286.9,113.4 1293.9,112.2 1300.8,111.7 1307.7,112.2 1314.7,112.5 1321.6,120.3 1328.5,112.9 1335.5,112 1342.4,112 1349.3,112.5 1356.2,113.4 1363.2,115.5 1370.1,112.5 1377,111.7 1384,112.5 1390.9,113 1397.8,115.5 1404.8,115.1 1411.7,112.2 1418.6,111.7 1425.6,110.8 1432.5,113 1439.4,114.6 1446.4,111.7 1453.3,112.9 1460.2,112 1467.2,112.2 1474.1,111.3 1481,111.1 1488,112 1494.9,113.9 1501.8,113 1508.8,107.3 1515.7,101.3 1522.6,100.7 1528,101.3 1535.8,96.4 1543.1,103.5 1549.7,103 1556.6,101.6 1563.5,101.6 1570.5,102.5 1577.4,103.3 1584.3,100.7 1590.7,102.6 1598.2,111.3 1605.1,103 1612.1,101.3 1619,100.4 1625.4,101.3 1632,104.2 1639.8,110.4 1646.7,111.3 1653.6,112 1660.6,113 1667.5,112 1674.4,112.5 1681.4,113.4 1688.3,112.2 1695.2,111.7 1702.2,112.2 1708.6,112.2 1715.5,114.8 1722.5,105.6 1729.4,105.1 1736.3,110.4 1743.3,111.1 1750.2,112.2 1757.1,112.5 1764,111.7 1771,111.1 1777.9,110.8 1784.8,111.7 1791.8,112.9 1798.7,118.6 1805.6,111.7 1812.2,113.7 1812.2,230 983,230" fill="#7EB26D" fill-opacity="0.1" stroke="none"/><polygon points="983,128.1 990.4,138.2 997.3,132.5 1004.3,128.6 1011.2,127.3 1018.1,130.7 1024.5,132.5 1031.5,132.8 1038.4,130.7 1041.9,129 1052.3,131.1 1062.7,125.5 1073.1,130.7 1083.1,124.7 1093.5,139.7 1103.9,112 1114.3,135.1 1124.7,135.9 1135.1,129.5 1145.5,132.8 1155.9,128.1 1166.3,125.5 1176.7,135.1 1186.8,142 1197.2,125.2 1207.5,135.4 1217.9,129.5 1228.3,129.5 1238.4,129 1248.8,127.8 1259.2,125 1269.6,128.1 1280,144.1 1290.4,126.9 1300.8,122.6 1311.2,126.4 1321.6,134.2 1332,123.8 1342.4,130.2 1352.8,124.7 1363.2,136.3 1373.6,126.4 1384,131.6 1394.4,125.2 1404.8,130.7 1415.2,126.4 1425.2,122.4 1436,134.7 1446.4,123.8 1456.8,126.4 1467.2,126 1477.6,124.1 1488,127.3 1497.8,128.6 1508.2,122.9 1519.2,113 1527.5,109.4 1528,109.4 1538.4,112 1549.7,114.6 1560.1,112.9 1570.5,113.4 1580.9,114.3 1591.3,122.1 1601.7,116.9 1612.1,112.2 1622.5,112.2 1632.9,117.7 1643.3,122.9 1653.6,125.2 1664,126.9 1674.4,124.7 1684.8,130.7 1694.7,125.9 1705.1,130.4 1715.5,132.8 1725.9,119.1 1736.3,120.8 1746.7,126.4 1757.1,130.7 1767.5,123.4 1777.9,126.4 1788,126 1798.7,136.3 1809.1,130.4 1809.1,230 983,230" fill="#EAB839" fill-opacity="0.1" stroke="none"/><polygon points="983,161.3 990.4,165.1 997.3,168.2 1004.3,157.5 1011.2,162.5 1018.1,163.5 1024.5,162.1 1031.5,167 1038.4,167.9 1045.3,169.4 1052.3,167.3 1059.2,162.1 1066.1,163.3 1073.1,163.3 1080,163.9 1086.9,164.4 1093.5,166.5 1100.8,150 1107.4,148.3 1114.3,165.6 1121.2,175.1 1128.2,159.2 1135.1,161.6 1142,163.5 1149,161.8 1155.9,160.7 1162.8,161.3 1169.8,161.3 1176.7,169.6 1183.6,199.9 1190.6,168.2 1197.5,160.4 1204.4,161.6 1211.4,166.8 1218.3,163 1225.2,162.1 1228,163 1231.5,163.9 1238.4,161.3 1245.3,164.4 1252.3,166.8 1259.2,160.7 1266.1,156.1 1273.1,174.3 1280,192.8 1286.9,167.3 1293.9,164.4 1300.8,153.5 1307.7,161.8 1314.7,153.1 1321.6,163.9 1328.5,162.5 1335.5,166.5 1342.4,168.7 1349.3,164.4 1356.2,167.3 1363.2,169.4 1370.1,165.6 1377,161.8 1384,165.6 1390.9,159.9 1397.8,166.8 1404.8,165.1 1411.7,160.9 1418.6,164.4 1425.6,161.6 1432.5,164.7 1439.1,173.1 1446,153.8 1453,166.5 1459.9,151.7 1466.8,164.7 1473.8,155.5 1480.7,159.9 1487.6,162.7 1494.6,165.9 1501.5,164.4 1508.4,148.8 1515.7,134.9 1522.6,133.2 1528,132.3 1535.8,129.4 1543.1,135.3 1549.7,134.4 1556.6,142.2 1563.5,141.3 1570.5,134.1 1577.4,135.8 1584.3,130.1 1591.3,142.4 1598.2,141.5 1605.1,135.8 1612.1,131.1 1619,128 1625.9,141.3 1632.9,142.7 1639.8,142.4 1646.7,151.4 1653.6,160.1 1660.6,164 1667.5,160.1 1674.4,157.1 1681.4,163.2 1688.3,161.3 1695.2,162.1 1702.2,171.3 1709.1,165.8 1716,163.9 1722.5,162.3 1729.4,150.9 1736.3,143.6 1743.3,160.6 1750.2,156.1 1757.1,161.4 1764,157.1 1771,161.3 1777.9,162.7 1784.8,167.5 1791.8,163.5 1798.7,162.3 1805.6,162.7 1812.2,163.5 1812.2,230 983,230" fill="#6ED0E0" fill-opacity="0.1" stroke="none"/><polygon points="983,211.9 990.4,214.1 997.3,211.2 1004.3,212.7 1011.2,212.9 1018.1,211.2 1024.5,213.6 1031.5,213.6 1038.4,210.7 1045.3,209.8 1052.3,213.6 1059.2,213.3 1066.1,210.1 1073.1,210.1 1080,213.6 1086.9,212.9 1093.5,212.7 1100.8,206.8 1107.4,209.8 1114.3,215.5 1121.2,219.7 1128.2,212.4 1135.1,213.3 1142,213.3 1149,213.6 1155.9,212 1162.8,213.6 1169.8,214.6 1176.7,219 1183.6,221.4 1190.6,216.4 1197.5,212.4 1204.4,213.3 1211.4,213.8 1218.3,213.3 1225.2,212.7 1228,214.5 1231.5,215.9 1238.4,214.6 1245.3,214.6 1252.3,216.7 1259.2,212.4 1266.1,214.5 1273.1,220.5 1280,219.8 1286.9,216.7 1293.9,218.1 1300.8,213.6 1307.7,213.6 1314.7,211.5 1321.6,212.4 1328.5,213.8 1335.5,216.4 1342.4,217.2 1349.3,216.4 1356.2,219 1363.2,215.9 1370.1,214.1 1377,212 1384,213.6 1390.9,212.9 1397.8,216.4 1404.8,215.9 1411.7,212.9 1418.6,217.2 1425.6,215.9 1432.5,213.8 1439.1,216.7 1446,214.1 1453,218.5 1459.9,212.4 1466.8,216.7 1473.8,213.3 1480.7,215.9 1487.6,215 1494.6,215 1501.5,215.5 1508.4,210.1 1515.3,167.3 1522.3,165.3 1528,163.5 1535.8,164.7 1542.7,167.3 1549.7,161.6 1556.6,172.5 1563.5,170.8 1570.5,174.3 1577.4,182.4 1584.3,170.8 1591.3,178.6 1598.2,175.5 1605.1,171.7 1612.1,165.6 1619,163.3 1625.9,168.5 1632.9,169.6 1639.8,179.5 1646.7,193.3 1653.6,206.8 1660.6,213.8 1667.5,210.1 1674.4,208.4 1681.4,214.5 1688.3,215.9 1695.2,211.9 1702.2,219.7 1709.1,218.8 1716,211.9 1722.5,210.7 1729.4,210.1 1736.3,210.1 1743.3,211 1750.2,212.7 1757.1,211.5 1764,210.3 1771,212.4 1777.9,214.1 1784.8,216.7 1791.8,211.5 1798.7,211.5 1805.6,215 1812.2,211 1812.2,230 983,230" fill="#EF843C" fill-opacity="0.1" stroke="none"/><polyline points="983,112.2 990.4,118.6 997.3,114.8 1004.3,110.8 1011.2,111.1 1018.1,114.3 1024.5,117.2 1031.5,113.7 1038.4,111.7 1045.3,110.8 1052.3,112.5 1059.2,110.4 1066.1,111.1 1073.1,113 1080,112.5 1086.9,114.3 1093.5,118.1 1100.8,97.4 1107.4,97.4 1114.3,116.9 1121.2,120.8 1128.2,111.7 1135.1,112.5 1142,114.6 1149,112 1155.9,111.7 1162.8,111.7 1169.8,112.2 1176.7,115.5 1183.6,116.5 1190.6,111.7 1197.5,111.3 1204.4,112.5 1211.4,114.6 1218.3,111.7 1225.2,111.7 1228,111.7 1231.5,112.2 1238.4,112.9 1245.3,112.9 1252.3,112 1259.2,110.8 1266.1,109.4 1273.1,112.5 1280,115.5 1286.9,113.4 1293.9,112.2 1300.8,111.7 1307.7,112.2 1314.7,112.5 1321.6,120.3 1328.5,112.9 1335.5,112 1342.4,112 1349.3,112.5 1356.2,113.4 1363.2,115.5 1370.1,112.5 1377,111.7 1384,112.5 1390.9,113 1397.8,115.5 1404.8,115.1 1411.7,112.2 1418.6,111.7 1425.6,110.8 1432.5,113 1439.4,114.6 1446.4,111.7 1453.3,112.9 1460.2,112 1467.2,112.2 1474.1,111.3 1481,111.1 1488,112 1494.9,113.9 1501.8,113 1508.8,107.3 1515.7,101.3 1522.6,100.7 1528,101.3 1535.8,96.4 1543.1,103.5 1549.7,103 1556.6,101.6 1563.5,101.6 1570.5,102.5 1577.4,103.3 1584.3,100.7 1590.7,102.6 1598.2,111.3 1605.1,103 1612.1,101.3 1619,100.4 1625.4,101.3 1632,104.2 1639.8,110.4 1646.7,111.3 1653.6,112 1660.6,113 1667.5,112 1674.4,112.5 1681.4,113.4 1688.3,112.2 1695.2,111.7 1702.2,112.2 1708.6,112.2 1715.5,114.8 1722.5,105.6 1729.4,105.1 1736.3,110.4 1743.3,111.1 1750.2,112.2 1757.1,112.5 1764,111.7 1771,111.1 1777.9,110.8 1784.8,111.7 1791.8,112.9 1798.7,118.6 1805.6,111.7 1812.2,113.7" fill="none" stroke="#7EB26D" stroke-width="1.1" stroke-linejoin="round" opacity="0.92"/><polyline points="983,128.1 990.4,138.2 997.3,132.5 1004.3,128.6 1011.2,127.3 1018.1,130.7 1024.5,132.5 1031.5,132.8 1038.4,130.7 1041.9,129 1052.3,131.1 1062.7,125.5 1073.1,130.7 1083.1,124.7 1093.5,139.7 1103.9,112 1114.3,135.1 1124.7,135.9 1135.1,129.5 1145.5,132.8 1155.9,128.1 1166.3,125.5 1176.7,135.1 1186.8,142 1197.2,125.2 1207.5,135.4 1217.9,129.5 1228.3,129.5 1238.4,129 1248.8,127.8 1259.2,125 1269.6,128.1 1280,144.1 1290.4,126.9 1300.8,122.6 1311.2,126.4 1321.6,134.2 1332,123.8 1342.4,130.2 1352.8,124.7 1363.2,136.3 1373.6,126.4 1384,131.6 1394.4,125.2 1404.8,130.7 1415.2,126.4 1425.2,122.4 1436,134.7 1446.4,123.8 1456.8,126.4 1467.2,126 1477.6,124.1 1488,127.3 1497.8,128.6 1508.2,122.9 1519.2,113 1527.5,109.4 1528,109.4 1538.4,112 1549.7,114.6 1560.1,112.9 1570.5,113.4 1580.9,114.3 1591.3,122.1 1601.7,116.9 1612.1,112.2 1622.5,112.2 1632.9,117.7 1643.3,122.9 1653.6,125.2 1664,126.9 1674.4,124.7 1684.8,130.7 1694.7,125.9 1705.1,130.4 1715.5,132.8 1725.9,119.1 1736.3,120.8 1746.7,126.4 1757.1,130.7 1767.5,123.4 1777.9,126.4 1788,126 1798.7,136.3 1809.1,130.4" fill="none" stroke="#EAB839" stroke-width="1.1" stroke-linejoin="round" opacity="0.92"/><polyline points="983,161.3 990.4,165.1 997.3,168.2 1004.3,157.5 1011.2,162.5 1018.1,163.5 1024.5,162.1 1031.5,167 1038.4,167.9 1045.3,169.4 1052.3,167.3 1059.2,162.1 1066.1,163.3 1073.1,163.3 1080,163.9 1086.9,164.4 1093.5,166.5 1100.8,150 1107.4,148.3 1114.3,165.6 1121.2,175.1 1128.2,159.2 1135.1,161.6 1142,163.5 1149,161.8 1155.9,160.7 1162.8,161.3 1169.8,161.3 1176.7,169.6 1183.6,199.9 1190.6,168.2 1197.5,160.4 1204.4,161.6 1211.4,166.8 1218.3,163 1225.2,162.1 1228,163 1231.5,163.9 1238.4,161.3 1245.3,164.4 1252.3,166.8 1259.2,160.7 1266.1,156.1 1273.1,174.3 1280,192.8 1286.9,167.3 1293.9,164.4 1300.8,153.5 1307.7,161.8 1314.7,153.1 1321.6,163.9 1328.5,162.5 1335.5,166.5 1342.4,168.7 1349.3,164.4 1356.2,167.3 1363.2,169.4 1370.1,165.6 1377,161.8 1384,165.6 1390.9,159.9 1397.8,166.8 1404.8,165.1 1411.7,160.9 1418.6,164.4 1425.6,161.6 1432.5,164.7 1439.1,173.1 1446,153.8 1453,166.5 1459.9,151.7 1466.8,164.7 1473.8,155.5 1480.7,159.9 1487.6,162.7 1494.6,165.9 1501.5,164.4 1508.4,148.8 1515.7,134.9 1522.6,133.2 1528,132.3 1535.8,129.4 1543.1,135.3 1549.7,134.4 1556.6,142.2 1563.5,141.3 1570.5,134.1 1577.4,135.8 1584.3,130.1 1591.3,142.4 1598.2,141.5 1605.1,135.8 1612.1,131.1 1619,128 1625.9,141.3 1632.9,142.7 1639.8,142.4 1646.7,151.4 1653.6,160.1 1660.6,164 1667.5,160.1 1674.4,157.1 1681.4,163.2 1688.3,161.3 1695.2,162.1 1702.2,171.3 1709.1,165.8 1716,163.9 1722.5,162.3 1729.4,150.9 1736.3,143.6 1743.3,160.6 1750.2,156.1 1757.1,161.4 1764,157.1 1771,161.3 1777.9,162.7 1784.8,167.5 1791.8,163.5 1798.7,162.3 1805.6,162.7 1812.2,163.5" fill="none" stroke="#6ED0E0" stroke-width="1.1" stroke-linejoin="round" opacity="0.92"/><polyline points="983,211.9 990.4,214.1 997.3,211.2 1004.3,212.7 1011.2,212.9 1018.1,211.2 1024.5,213.6 1031.5,213.6 1038.4,210.7 1045.3,209.8 1052.3,213.6 1059.2,213.3 1066.1,210.1 1073.1,210.1 1080,213.6 1086.9,212.9 1093.5,212.7 1100.8,206.8 1107.4,209.8 1114.3,215.5 1121.2,219.7 1128.2,212.4 1135.1,213.3 1142,213.3 1149,213.6 1155.9,212 1162.8,213.6 1169.8,214.6 1176.7,219 1183.6,221.4 1190.6,216.4 1197.5,212.4 1204.4,213.3 1211.4,213.8 1218.3,213.3 1225.2,212.7 1228,214.5 1231.5,215.9 1238.4,214.6 1245.3,214.6 1252.3,216.7 1259.2,212.4 1266.1,214.5 1273.1,220.5 1280,219.8 1286.9,216.7 1293.9,218.1 1300.8,213.6 1307.7,213.6 1314.7,211.5 1321.6,212.4 1328.5,213.8 1335.5,216.4 1342.4,217.2 1349.3,216.4 1356.2,219 1363.2,215.9 1370.1,214.1 1377,212 1384,213.6 1390.9,212.9 1397.8,216.4 1404.8,215.9 1411.7,212.9 1418.6,217.2 1425.6,215.9 1432.5,213.8 1439.1,216.7 1446,214.1 1453,218.5 1459.9,212.4 1466.8,216.7 1473.8,213.3 1480.7,215.9 1487.6,215 1494.6,215 1501.5,215.5 1508.4,210.1 1515.3,167.3 1522.3,165.3 1528,163.5 1535.8,164.7 1542.7,167.3 1549.7,161.6 1556.6,172.5 1563.5,170.8 1570.5,174.3 1577.4,182.4 1584.3,170.8 1591.3,178.6 1598.2,175.5 1605.1,171.7 1612.1,165.6 1619,163.3 1625.9,168.5 1632.9,169.6 1639.8,179.5 1646.7,193.3 1653.6,206.8 1660.6,213.8 1667.5,210.1 1674.4,208.4 1681.4,214.5 1688.3,215.9 1695.2,211.9 1702.2,219.7 1709.1,218.8 1716,211.9 1722.5,210.7 1729.4,210.1 1736.3,210.1 1743.3,211 1750.2,212.7 1757.1,211.5 1764,210.3 1771,212.4 1777.9,214.1 1784.8,216.7 1791.8,211.5 1798.7,211.5 1805.6,215 1812.2,211" fill="none" stroke="#EF843C" stroke-width="1.1" stroke-linejoin="round" opacity="0.92"/></g><defs><clipPath id="c3"><rect x="43.5" y="321" width="518.5" height="185"/></clipPath></defs><rect x="43.5" y="322.7" width="518.5" height="1" fill="rgba(200,200,200,0.17)"/><rect x="43.5" y="352.8" width="518.5" height="1" fill="rgba(200,200,200,0.17)"/><rect x="43.5" y="382.9" width="518.5" height="1" fill="rgba(200,200,200,0.17)"/><rect x="43.5" y="413" width="518.5" height="1" fill="rgba(200,200,200,0.17)"/><rect x="43.5" y="443.1" width="518.5" height="1" fill="rgba(200,200,200,0.17)"/><rect x="43.5" y="473.2" width="518.5" height="1" fill="rgba(200,200,200,0.17)"/><rect x="43.5" y="503.3" width="518.5" height="1" fill="rgba(200,200,200,0.17)"/><rect x="111.1" y="323" width="1" height="181" fill="rgba(200,200,200,0.17)"/><rect x="197.6" y="323" width="1" height="181" fill="rgba(200,200,200,0.17)"/><rect x="284" y="323" width="1" height="181" fill="rgba(200,200,200,0.17)"/><rect x="370.5" y="323" width="1" height="181" fill="rgba(200,200,200,0.17)"/><rect x="456.9" y="323" width="1" height="181" fill="rgba(200,200,200,0.17)"/><rect x="543.4" y="323" width="1" height="181" fill="rgba(200,200,200,0.17)"/><text x="459.5" y="306.4" text-anchor="middle" class="ttl">CPS By Instance</text><text x="38" y="326.2" text-anchor="end" class="ax">600</text><text x="38" y="355.7" text-anchor="end" class="ax">500</text><text x="38" y="386.2" text-anchor="end" class="ax">400</text><text x="38" y="416.4" text-anchor="end" class="ax">300</text><text x="38" y="446" text-anchor="end" class="ax">200</text><text x="38" y="476.2" text-anchor="end" class="ax">100</text><text x="38" y="507.1" text-anchor="end" class="ax">0</text><text x="111.6" y="519.1" text-anchor="middle" class="ax">19:30</text><text x="198.1" y="519.1" text-anchor="middle" class="ax">19:40</text><text x="284.5" y="519.1" text-anchor="middle" class="ax">19:50</text><text x="371" y="519.1" text-anchor="middle" class="ax">20:00</text><text x="457.4" y="519.1" text-anchor="middle" class="ax">20:10</text><text x="543.9" y="519.1" text-anchor="middle" class="ax">20:20</text><g clip-path="url(#c3)"><polyline points="43.5,433.9 46.7,448.7 51,464.7 55.3,449.9 59.5,435.6 63.8,435.6 68.1,448 72.4,448.9 76.9,439.2 81.2,436.1 85.5,435.6 89.8,458.7 94.3,442.7 98.6,426.8 102.9,430.3 107.2,423 111.5,383.2 115.8,455.1 120.1,463.7 124.6,447.5 128.9,467 133.2,464.7 137.7,462.5 142,430.3 146.3,429.6 150.6,446.3 154.9,436.8 159.2,433.2 163.5,452.3 168,459.4 172.3,445.6 176.6,469 180.8,456.6 185.1,417.7 189.4,449.4 193.7,447.5 198,432.5 202.5,449.4 206.8,439.2 211.1,453.5 215.4,463.7 219.7,467.8 224.2,439.2 228.5,429.6 232.8,452.3 237.1,448.9 241.4,470.6 245.7,467.8 250.2,473.7 254.5,437.3 258.8,449.4 263.1,437.3 267.4,441.5 271.6,439.2 275.9,424.9 280.2,399.1 284.8,439.2 289,458.7 293.3,440.8 297.6,433.2 302.4,430.3 306.7,442.7 311,454.2 315.3,458.2 319.5,467.8 323.8,441.5 328.1,427.2 332.4,472.5 336.9,450.6 341.2,472 345.5,445.1 349.8,457 354.3,467 358.6,470.6 362.9,458.2 367.2,454.2 371.5,457.8 375.8,470.1 380.1,476.8 384.6,475.4 388.9,472 393.2,457 397.7,472.5 402,468.2 406.3,469.7 410.6,470.6 414.9,469.4 419.2,478.5 423.5,450.6 428,448 432.3,466.6 436.6,472 440.8,478 445.1,478 449.4,472.5 453.7,463 458,439.9 462.5,443.2 466.8,421.8 471.1,426.1 475.4,450.6 479.7,423 484.2,427.7 488.5,416.5 492.8,378.4 497.1,414.1 501.4,417.2 505.7,429.6 510.2,463 514.5,465.9 518.8,435.1 523.1,464.2 527.4,422.5 531.6,443.2 535.9,436.8 540.2,445.1 544.8,438 549,420.1 553.3,429.6 557.6,442.7 561.9,421.3" fill="none" stroke="#B7DBAB" stroke-width="1.2" stroke-linejoin="round" opacity="0.95"/><polyline points="43.5,432.5 46.7,414.1 51,400.6 55.3,435.6 59.5,443.5 63.8,432 68.1,415.3 72.4,408.2 76.9,403.4 81.2,415.3 85.5,442.7 89.8,443.5 94.3,435.1 98.6,440.4 102.9,440.8 107.2,435.6 111.5,418.2 115.8,472 120.1,448.7 124.6,379.6 128.9,339.1 133.2,435.6 137.7,423.7 142,409.4 146.3,447.5 150.6,433.7 154.9,440.4 159.2,457.8 163.5,389.1 168,332.4 172.3,421.3 176.6,436.8 180.8,440.4 185.1,399.1 189.4,432 193.7,445.1 198,418.9 202.5,430.1 206.8,422 211.1,427.2 215.4,442.7 219.7,429.6 224.2,414.1 228.5,381.5 232.8,384.3 237.1,404.6 241.4,444.4 245.7,431.5 250.2,436.8 254.5,399.1 258.8,430.1 263.1,428.4 267.4,421.3 271.6,432 275.9,440.4 280.2,414.1 284.8,424.9 289,439.2 293.3,432 297.6,451.6 302.4,414.1 306.7,410.6 311,442.7 315.3,399.8 319.5,421.3 323.8,390.3 328.1,389.1 332.4,424.9 336.9,408.7 341.2,445.1 345.5,423.7 349.8,448.7 354.3,430.1 358.6,426.1 362.9,410.1 367.2,398.6 371.5,445.1 375.8,458.2 380.1,466.6 384.6,469 388.9,467.8 393.2,455.1 397.7,462.5 402,446.3 406.3,450.6 410.6,452.3 414.9,445.1 419.2,454.2 423.5,427.2 428,436.8 432.3,448.7 436.6,459.4 440.8,462.5 445.1,442.7 449.4,450.6 453.7,442.7 458,434.4 462.5,415.3 466.8,388.4 471.1,437.3 475.4,421.3 479.7,392.2 484.2,420.1 488.5,415.3 492.8,407 497.1,420.6 501.4,375.3 505.7,408.2 510.2,451.8 514.5,438 518.8,428.4 523.1,430.8 527.4,420.1 531.6,427.2 535.9,436.8 540.2,428.4 544.8,420.1 549,408.7 553.3,407 557.6,448 561.9,411.8" fill="none" stroke="#C15C17" stroke-width="1.1" stroke-linejoin="round" opacity="0.78"/><polyline points="43.5,499.3 111,499.2 113,499.6 116,500.6 120,499 124,498.3 128,499.2 370,499.3 376,501.2 380,500.5 388,501.3 393,499.2 398,500.2 403,499.2 410,499.2 414,498.6 419,500 423,497 428,498.2 432,499 440,500.3 444,497 449,496.6 454,499.2 562,499.3" fill="none" stroke="#962D82" stroke-width="1.2" stroke-linejoin="round" opacity="1"/></g><rect x="43.5" y="503" width="518.5" height="2" fill="#f5e6e0"/><defs><clipPath id="c4"><rect x="973" y="323" width="616.3" height="181"/></clipPath></defs><rect x="973" y="322.7" width="616.3" height="1" fill="rgba(200,200,200,0.17)"/><rect x="973" y="345.6" width="616.3" height="1" fill="rgba(200,200,200,0.17)"/><rect x="973" y="369.6" width="616.3" height="1" fill="rgba(200,200,200,0.17)"/><rect x="973" y="393.1" width="616.3" height="1" fill="rgba(200,200,200,0.17)"/><rect x="973" y="416.8" width="616.3" height="1" fill="rgba(200,200,200,0.17)"/><rect x="973" y="440.5" width="616.3" height="1" fill="rgba(200,200,200,0.17)"/><rect x="973" y="464.2" width="616.3" height="1" fill="rgba(200,200,200,0.17)"/><rect x="973" y="503.2" width="616.3" height="1" fill="rgba(200,200,200,0.17)"/><rect x="1054.8" y="323" width="1" height="181" fill="rgba(200,200,200,0.17)"/><rect x="1157.4" y="323" width="1" height="181" fill="rgba(200,200,200,0.17)"/><rect x="1260" y="323" width="1" height="181" fill="rgba(200,200,200,0.17)"/><rect x="1362.7" y="323" width="1" height="181" fill="rgba(200,200,200,0.17)"/><rect x="1465.3" y="323" width="1" height="181" fill="rgba(200,200,200,0.17)"/><rect x="1567.9" y="323" width="1" height="181" fill="rgba(200,200,200,0.17)"/><text x="1383.5" y="306.4" text-anchor="middle" class="ttl">Failed Query OPM</text><text x="967.8" y="326.1" text-anchor="end" class="ax">4.1 K</text><text x="967.8" y="349" text-anchor="end" class="ax">1.0 K</text><text x="967.8" y="372.1" text-anchor="end" class="ax">256</text><text x="967.8" y="396.9" text-anchor="end" class="ax">64</text><text x="967.8" y="420.1" text-anchor="end" class="ax">16</text><text x="967.8" y="444.1" text-anchor="end" class="ax">4</text><text x="967.8" y="467.1" text-anchor="end" class="ax">1</text><text x="967.8" y="506.9" text-anchor="end" class="ax">0</text><text x="1054.8" y="519.1" text-anchor="middle" class="ax">19:30</text><text x="1157.3" y="519.1" text-anchor="middle" class="ax">19:40</text><text x="1259.9" y="519.1" text-anchor="middle" class="ax">19:50</text><text x="1362.4" y="519.1" text-anchor="middle" class="ax">20:00</text><text x="1465" y="519.1" text-anchor="middle" class="ax">20:10</text><text x="1567.6" y="519.1" text-anchor="middle" class="ax">20:20</text><g clip-path="url(#c4)"><polyline points="1126.2,503.7 1131.7,447.8 1142,447.8 1147.3,503.7" fill="none" stroke="#CCA300" stroke-width="1.1" stroke-linejoin="round" opacity="0.9"/><polyline points="1287.5,503.7 1290.7,449.7 1291.7,447.8 1295.7,447.8 1296.7,449.7 1301.5,503.7" fill="none" stroke="#890F02" stroke-width="1.1" stroke-linejoin="round" opacity="0.95"/><polyline points="973,403.6 978.1,400.4 982.8,405.4 988.1,405.4 993.1,416 998.1,414.6 1003.4,413.3 1008.4,432 1013.7,403.6 1018.7,398.8 1023.7,397.5 1028.9,392.2 1034,393 1039,392.5 1044.2,394.3 1049.2,393.3 1054.5,393 1059.5,392.2 1064.5,388.3 1069.8,394.3 1074.8,394.1 1080.1,397.5 1085.1,399.1 1090.4,394.9 1095.4,393.6 1100.4,397.5 1105.6,398.3 1110.7,396.2 1115.9,402.8 1120.9,405.4 1126.2,400.9 1131.2,397.8 1136.5,402.8 1141.5,408 1146.8,406.5 1151.8,406.2 1157,404.9 1162.1,407 1167.3,408.8 1172.3,408 1177.6,409.6 1182.6,408.8 1187.9,404.9 1192.9,405.4 1198.2,406.2 1203.2,411.5 1208.4,404.1 1213.5,408.3 1218.7,409.6 1223.7,401.7 1229,402.3 1234,406.2 1239.8,414.6 1244.3,410.7 1250.1,403 1255.1,399.6 1260.6,402.3 1265.4,406.2 1270.7,401.7 1275.7,404.1 1280.9,402 1285.9,411.5 1291.2,406.2 1296.2,399.6 1301.5,402 1306.5,404.1 1311.8,403.6 1316.8,411.5 1322,410.2 1327.1,408 1332.3,401.7 1337.3,412 1342.6,411.2 1347.6,413.6 1352.9,408.3 1358.2,403.3 1363.2,404.1 1368.2,408 1373.4,410.9 1378.7,410.9 1383.7,411.2 1389,415.4 1394,417.3 1399.3,417.3 1404.5,412.3 1409.6,413.3 1414.8,412.3 1419.8,420.2 1425.1,414.6 1430.1,411.5 1435.4,407.3 1440.4,409.6 1445.7,414.6 1450.7,411.5 1455.9,409.4 1461,405.2 1466.2,411.2 1471.2,411.2 1476.2,402.5 1481.5,409.6 1486.8,411.7 1491.8,407.3 1497.1,408.6 1502.1,408.3 1507.3,414.6 1512.3,414.6 1517.6,412.5 1522.6,416 1527.9,418.9 1532.9,424.4 1537.9,412.5 1543.2,420.7 1548.2,422.5 1553.5,417.3 1558.5,416.2 1563.7,414.9 1568.8,414.9 1574,410.4 1579,418.6 1584.3,422.5 1589.3,412.8" fill="none" stroke="#6D1F62" stroke-width="1.2" stroke-linejoin="round" opacity="1"/><polyline points="973,349.5 1054.5,349.5 1059.8,356.7 1065.1,348.2 1070.3,346.1 1075.6,349.5 1358.2,349.5 1363.4,351.4 1368.7,359.6 1373.4,353.8 1378.7,356.7 1384,359.6 1389,349.5 1394.3,356.7 1399.3,351.6 1404.5,351.4 1409.6,351.4 1414.8,347.7 1419.8,353.8 1424.8,341.9 1430.1,344.5 1435.4,349.5 1440.4,350.9 1445.7,354.3 1450.7,341.6 1455.9,341.6 1461,349.5 1589.3,349.5" fill="none" stroke="#F9BA8F" stroke-width="1.2" stroke-linejoin="round" opacity="0.95"/><polyline points="1507.1,503.7 1512.1,447.8 1517.4,503.7" fill="none" stroke="#F29191" stroke-width="1.1" stroke-linejoin="round" opacity="0.9"/><polyline points="1285.9,503.7 1291.2,459.4 1296.5,459.4 1300.2,503.7" fill="none" stroke="#82B5D8" stroke-width="1.1" stroke-linejoin="round" opacity="0.9"/><polyline points="1285.9,503.7 1291.7,459.4 1293.8,459.4 1296.7,503.7" fill="none" stroke="#64B0C8" stroke-width="1.1" stroke-linejoin="round" opacity="0.9"/><polyline points="1532.9,503.7 1537.9,459.4 1542.7,503.7" fill="none" stroke="#82B5D8" stroke-width="1.1" stroke-linejoin="round" opacity="0.9"/></g><defs><clipPath id="c5"><rect x="43.5" y="575" width="639.9" height="180.5"/></clipPath></defs><rect x="43.5" y="574.8" width="639.9" height="1" fill="rgba(200,200,200,0.17)"/><rect x="43.5" y="619.7" width="639.9" height="1" fill="rgba(200,200,200,0.17)"/><rect x="43.5" y="664.6" width="639.9" height="1" fill="rgba(200,200,200,0.17)"/><rect x="43.5" y="709.6" width="639.9" height="1" fill="rgba(200,200,200,0.17)"/><rect x="43.5" y="754.6" width="639.9" height="1" fill="rgba(200,200,200,0.17)"/><rect x="128.1" y="575" width="1" height="180.5" fill="rgba(200,200,200,0.17)"/><rect x="234.7" y="575" width="1" height="180.5" fill="rgba(200,200,200,0.17)"/><rect x="341.5" y="575" width="1" height="180.5" fill="rgba(200,200,200,0.17)"/><rect x="448.3" y="575" width="1" height="180.5" fill="rgba(200,200,200,0.17)"/><rect x="554.9" y="575" width="1" height="180.5" fill="rgba(200,200,200,0.17)"/><rect x="661.6" y="575" width="1" height="180.5" fill="rgba(200,200,200,0.17)"/><text x="460" y="558.2" text-anchor="middle" class="ttl">Connection Count</text><text x="38" y="578.4" text-anchor="end" class="ax">800</text><text x="38" y="623.2" text-anchor="end" class="ax">600</text><text x="38" y="668.1" text-anchor="end" class="ax">400</text><text x="38" y="714.1" text-anchor="end" class="ax">200</text><text x="38" y="759.1" text-anchor="end" class="ax">0</text><text x="128.6" y="771.1" text-anchor="middle" class="ax">19:30</text><text x="234.9" y="771.1" text-anchor="middle" class="ax">19:40</text><text x="341.3" y="771.1" text-anchor="middle" class="ax">19:50</text><text x="447.7" y="771.1" text-anchor="middle" class="ax">20:00</text><text x="554" y="771.1" text-anchor="middle" class="ax">20:10</text><text x="660.4" y="771.1" text-anchor="middle" class="ax">20:20</text><g clip-path="url(#c5)"><polygon points="43.5,716.4 90.2,716.4 91.7,717.3 442.8,717.3 447.9,716.1 448.8,713.1 460.9,712.2 470,711.9 482.1,712.5 506.3,712.8 515.3,711.3 527.4,711.3 536.5,712.8 545.6,714.3 555.2,715.2 683.4,715.2 683.4,755.5 43.5,755.5" fill="#7EB26D" fill-opacity="0.1" stroke="none"/><polygon points="43.5,677.1 90.2,677.1 91.7,678.9 442.8,678.9 447.9,677.4 448.8,669 454.3,670.2 460.9,669 470,668.1 482.1,669.3 497.2,669.3 506.3,670.2 512.9,667.5 527.4,667.2 533.5,669 539.5,670.5 545.6,672.9 555.2,674.7 560.7,675.3 612.1,675 683.4,674.7 683.4,715.2 555.2,715.2 545.6,714.3 536.5,712.8 527.4,711.3 515.3,711.3 506.3,712.8 482.1,712.5 470,711.9 460.9,712.2 448.8,713.1 447.9,716.1 442.8,717.3 91.7,717.3 90.2,716.4 43.5,716.4" fill="#ffaa64" fill-opacity="0.1"/><polyline points="43.5,716.4 90.2,716.4 91.7,717.3 442.8,717.3 447.9,716.1 448.8,713.1 460.9,712.2 470,711.9 482.1,712.5 506.3,712.8 515.3,711.3 527.4,711.3 536.5,712.8 545.6,714.3 555.2,715.2 683.4,715.2" fill="none" stroke="#7EB26D" stroke-width="1.1" stroke-linejoin="round" opacity="0.9"/><polyline points="43.5,677.1 90.2,677.1 91.7,678.9 442.8,678.9 447.9,677.4 448.8,669 454.3,670.2 460.9,669 470,668.1 482.1,669.3 497.2,669.3 506.3,670.2 512.9,667.5 527.4,667.2 533.5,669 539.5,670.5 545.6,672.9 555.2,674.7 560.7,675.3 612.1,675 683.4,674.7" fill="none" stroke="#6ED0E0" stroke-width="1.6" stroke-linejoin="round" opacity="0.5"/><polyline points="43.5,677.1 90.2,677.1 91.7,678.9 442.8,678.9 447.9,677.4 448.8,669 454.3,670.2 460.9,669 470,668.1 482.1,669.3 497.2,669.3 506.3,670.2 512.9,667.5 527.4,667.2 533.5,669 539.5,670.5 545.6,672.9 555.2,674.7 560.7,675.3 612.1,675 683.4,674.7" fill="none" stroke="#EAB839" stroke-width="1.5" stroke-linejoin="round" opacity="0.78"/></g><defs><clipPath id="c6"><rect x="980" y="575" width="478.8" height="180.5"/></clipPath></defs><rect x="980" y="574.8" width="478.8" height="1" fill="rgba(200,200,200,0.17)"/><rect x="980" y="619.8" width="478.8" height="1" fill="rgba(200,200,200,0.17)"/><rect x="980" y="664.8" width="478.8" height="1" fill="rgba(200,200,200,0.17)"/><rect x="980" y="709.9" width="478.8" height="1" fill="rgba(200,200,200,0.17)"/><rect x="980" y="754.9" width="478.8" height="1" fill="rgba(200,200,200,0.17)"/><rect x="1043" y="575" width="1" height="180.5" fill="rgba(200,200,200,0.17)"/><rect x="1122.7" y="575" width="1" height="180.5" fill="rgba(200,200,200,0.17)"/><rect x="1202.4" y="575" width="1" height="180.5" fill="rgba(200,200,200,0.17)"/><rect x="1282.2" y="575" width="1" height="180.5" fill="rgba(200,200,200,0.17)"/><rect x="1361.9" y="575" width="1" height="180.5" fill="rgba(200,200,200,0.17)"/><rect x="1441.6" y="575" width="1" height="180.5" fill="rgba(200,200,200,0.17)"/><text x="1383.5" y="558.2" text-anchor="middle" class="ttl">Memory Usage</text><text x="975" y="578.4" text-anchor="end" class="ax axl">19 GiB</text><text x="975" y="623.4" text-anchor="end" class="ax axl">14 GiB</text><text x="975" y="668.4" text-anchor="end" class="ax axl">9 GiB</text><text x="975" y="713.5" text-anchor="end" class="ax axl">5 GiB</text><text x="975" y="758.5" text-anchor="end" class="ax">0 B</text><text x="1043.7" y="771.1" text-anchor="middle" class="ax">19:30</text><text x="1123.3" y="771.1" text-anchor="middle" class="ax">19:40</text><text x="1202.9" y="771.1" text-anchor="middle" class="ax">19:50</text><text x="1282.5" y="771.1" text-anchor="middle" class="ax">20:00</text><text x="1362.1" y="771.1" text-anchor="middle" class="ax">20:10</text><text x="1441.7" y="771.1" text-anchor="middle" class="ax">20:20</text><g clip-path="url(#c6)"><polyline points="979.9,671 987.4,673.2 995.7,671 1003.4,673.2 1008.1,664.9 1027.4,670.5 1031.6,664.4 1043.4,667.7 1051.4,670.5 1060,673.2 1064.7,671.8 1068.8,666.3 1079.3,669.6 1084,669.1 1095.9,672.7 1099.8,668.3 1107.5,669.1 1111.7,667.2 1139.3,673.8 1143.4,667.2 1159.4,671.8 1162.7,670.5 1175.2,673.8 1179.3,668.5 1186.8,670.5 1204.2,669.1 1203,672.4 1207.1,666.3 1219,669.9 1223.1,669.6 1234.2,672.7 1238.3,670.5 1242.5,671 1246.6,669.9 1250.8,671.8 1262.4,673.8 1266.5,668.3 1278.4,671.8 1282.5,659.4 1286.7,649.2 1314.3,658 1318.4,650.3 1339.1,656.7 1346.3,658.6 1350.7,652.5 1402.1,667.4 1406.2,632.4 1410.4,604.2 1458.7,618.8" fill="none" stroke="#7EB26D" stroke-width="1.1" stroke-linejoin="round" opacity="0.9"/><polyline points="979.9,657.2 983.2,660 987.4,659.4 1043.4,676.5 1047.3,669.6 1051.4,667.7 1067.5,672.7 1071.6,664.4 1079.3,659.4 1151.7,680.7 1155,679.3 1159.4,675.4 1171,678.8 1175.2,678.8 1182.9,681.5 1186.8,669.1 1190.4,669.6 1226.5,680.4 1230.6,671 1258.5,679.3 1262.6,672.7 1278.4,677.4 1282.5,671.8 1286.7,669.9 1290.8,661.6 1294.4,660 1298.5,627.7 1458.7,676.3" fill="none" stroke="#EAB839" stroke-width="1.1" stroke-linejoin="round" opacity="0.9"/><polyline points="980,714.7 983.9,706.3 987.9,725.5 991.9,717.1 995.8,704.9 999.9,708.6 1003.8,712.6 1007.9,712.4 1011.8,692.3 1015.9,722.1 1019.8,710.6 1023.9,710.3 1027.8,707.9 1031.8,724.1 1035.8,717.4 1039.8,710.3 1043.8,723.5 1047.8,713.3 1051.7,718.7 1055.8,722.1 1059.7,722.1 1063.8,716 1067.7,714 1071.8,713.3 1075.7,721.4 1079.8,720.5 1083.7,705.5 1087.8,721.4 1091.7,702.5 1095.7,716.7 1099.7,714.7 1103.7,705.5 1107.6,722.1 1111.7,721.4 1115.6,714 1119.7,709.7 1123.6,724.1 1127.7,714.7 1131.6,709.3 1135.7,718.1 1139.6,719 1143.7,725.5 1147.6,717.4 1151.6,731.9 1155.6,710.6 1159.6,723.5 1163.5,706.8 1167.6,705.5 1171.5,713.3 1175.6,727.5 1179.5,714.7 1183.6,718.1 1187.5,703.2 1191.6,704.9 1195.5,710.6 1199.6,716.7 1203.5,725.2 1207.5,719.4 1211.5,723.5 1215,726.6 1219.1,724.8 1223,707.6 1227,715.3 1231,717.6 1235,707.6 1239,707.9 1243,707.2 1246.9,718.1 1251,719.8 1254.9,713 1259,710.6 1262.9,721.4 1267,698.4 1270.9,723.5 1275,710.6 1278.9,726.2 1282.9,715.3 1286.9,698.4 1290.9,699.1 1294.9,709.3 1298.9,701.4 1302.8,706.5 1306.9,719.4 1310.8,703.6 1314.9,702.2 1318.8,701.4 1322.9,707.2 1326.8,719.8 1330.9,708.6 1334.8,716 1338.8,710.6 1342.8,704.9 1346.8,699.5 1350.8,718.1 1354.8,708.6 1358.7,727.5 1362.8,718.1 1366.7,701.4 1370.8,720.8 1374.7,722.1 1378.8,720.8 1382.7,728.2 1386.8,709.3 1390.7,717.4 1394.8,715.3 1398.7,710.3 1402.7,730.2 1406.7,700.5 1410.7,695.4 1414.6,722.1 1418.7,701.4 1422.6,723.1 1426.7,710.6 1430.6,707.2 1434.7,717.4 1438.6,716 1442.7,723.5 1446.6,732 1450.7,709.3 1454.6,728.5 1458.6,720.1" fill="none" stroke="#6ED0E0" stroke-width="1.1" stroke-linejoin="round" opacity="0.9"/><polyline points="980,698.8 983.9,710.6 987.9,721.2 991.9,707.5 995.8,724.5 999.9,709.9 1003.8,709.3 1007.9,727.5 1011.8,702.5 1015.9,712 1019.8,709.7 1023.9,720.5 1027.8,721.4 1031.8,702.9 1035.8,713.3 1039.8,699.5 1043.8,712 1047.8,700.5 1051.7,711.6 1055.8,705.9 1059.7,707 1063.8,712.6 1067.7,705.9 1071.8,699.1 1075.7,698.4 1079.8,708.6 1083.7,691.4 1087.8,716 1091.7,709.3 1095.7,717.6 1099.7,704.9 1103.7,721.4 1107.6,708.6 1111.7,719.8 1115.6,719.4 1119.7,719.4 1123.6,725.2 1127.7,719.4 1131.6,704.5 1135.7,716 1139.6,709.3 1143.7,709.3 1147.6,719.4 1151.6,726.8 1155.6,718.5 1159.6,718.5 1163.5,720.4 1167.6,714.7 1171.5,718.5 1175.6,722.1 1179.5,726.8 1183.6,708.6 1187.5,722.8 1191.6,706.5 1195.5,724.1 1199.6,700.9 1203.5,709.3 1207.5,732.5 1211.5,720.8 1215,712.2 1219.1,713 1223,705.5 1227,716 1231,729.3 1235,719.4 1239,729.6 1243,707.9 1246.9,717.4 1251,710.6 1254.9,710.3 1259,709.5 1262.9,713 1267,708.6 1270.9,712 1275,705.5 1278.9,705.9 1282.9,716.7 1286.9,700 1290.9,699.1 1294.9,699.1 1298.9,677.4 1302.8,683.5 1306.9,686.9 1310.8,717.4 1314.9,718.7 1318.8,682.5 1322.9,700.5 1326.8,695 1330.9,698.4 1334.8,703.8 1338.8,716.7 1342.8,706.5 1346.8,700.5 1350.8,707.2 1354.8,713.6 1358.7,703.8 1362.8,695.4 1366.7,715.3 1370.8,718.7 1374.7,709.5 1378.8,711.3 1382.7,705.9 1386.8,703.6 1390.7,718.1 1394.8,717.4 1398.7,715.3 1402.7,719.4 1406.7,717.1 1410.7,721.4 1414.6,723.5 1418.7,695.4 1422.6,713.3 1426.7,707.2 1430.6,708.6 1434.7,708.6 1438.6,723.5 1442.7,714.7 1446.6,712 1450.7,707.2 1454.6,705.5 1458.6,720.8" fill="none" stroke="#EF843C" stroke-width="1.1" stroke-linejoin="round" opacity="0.9"/></g><g opacity="0.92"><path d="M8 10 L18 20 M3 36 L14 45 M5 94 L20 62 M42 3 L36 15 M28 16 H56 V48 H28 Z M28 32 H56 M42 52 V60 M23 62 H61 M38 62 Q36 84 23 96 M38 75 H55 Q54 92 50 95 L45 92 M73 3 Q69 20 61 32 M68 22 H98 M88 22 Q84 70 60 97 M69 42 Q78 76 99 96" transform="translate(1566.6,726.6) scale(0.1820)" fill="none" stroke="#8a8a8a" stroke-width="6.9" stroke-linecap="butt"/><path d="M8 10 L18 20 M3 36 L14 45 M5 94 L20 62 M88 5 Q66 14 40 18 M32 36 H98 M65 14 V58 M42 58 H90 V95 H42 Z" transform="translate(1586.2,726.6) scale(0.1820)" fill="none" stroke="#8a8a8a" stroke-width="6.9" stroke-linecap="butt"/><text x="1613" y="742.3" style="font-family:'Liberation Sans', sans-serif;font-size:20.4px;letter-spacing:0.65px" fill="#8a8a8a">Windows</text><path d="M5 20 H44 M26 3 Q20 30 9 50 H44 M27 32 V97 M3 76 L46 68 M54 18 H93 M46 40 H98 M73 3 Q68 36 60 60 H92 Q84 74 72 84 M68 76 Q78 84 86 95" transform="translate(1566.3,752.6) scale(0.1360)" fill="none" stroke="#8a8a8a" stroke-width="7.7" stroke-linecap="butt"/><path d="M5 10 H63 M33 10 Q26 26 12 38 L56 33 M47 24 Q54 32 60 42 M11 62 H57 M34 44 V90 M3 91 H65 M75 14 V70 M94 3 V90 Q93 96 83 92" transform="translate(1581.1,752.6) scale(0.1360)" fill="none" stroke="#8a8a8a" stroke-width="7.7" stroke-linecap="butt"/><path d="M40 8 Q32 16 32 30 M62 8 Q54 16 54 30" transform="translate(1591.6,752.6) scale(0.1360)" fill="none" stroke="#8a8a8a" stroke-width="7.7" stroke-linecap="butt"/><path d="M9 7 L20 18 M3 35 H20 V84 L34 72 M53 8 Q52 30 40 44 M53 8 H80 V34 Q81 38 97 37 M41 55 H89 Q76 84 42 97 M50 60 Q66 86 98 97" transform="translate(1601.7,752.6) scale(0.1360)" fill="none" stroke="#8a8a8a" stroke-width="7.7" stroke-linecap="butt"/><path d="M13 5 H87 V24 H13 Z M38 5 V24 M62 5 V24 M7 36 H93 M50 26 V46 M28 46 H76 V87 H28 Z M28 60 H76 M28 73 H76 M12 48 V96 H95" transform="translate(1616.9,752.6) scale(0.1360)" fill="none" stroke="#8a8a8a" stroke-width="7.7" stroke-linecap="butt"/><path d="M38 8 Q38 22 30 30 M60 8 Q60 22 52 30" transform="translate(1628.4,752.6) scale(0.1360)" fill="none" stroke="#8a8a8a" stroke-width="7.7" stroke-linecap="butt"/><path d="M14 13 V72 L41 55 M35 25 Q43 32 49 43 M83 7 Q82 66 38 96 M71 63 Q82 80 96 95" transform="translate(1638.3,752.6) scale(0.1360)" fill="none" stroke="#8a8a8a" stroke-width="7.7" stroke-linecap="butt"/><path d="M8 10 L18 20 M3 36 L14 45 M5 94 L20 62 M42 3 L36 15 M28 16 H56 V48 H28 Z M28 32 H56 M42 52 V60 M23 62 H61 M38 62 Q36 84 23 96 M38 75 H55 Q54 92 50 95 L45 92 M73 3 Q69 20 61 32 M68 22 H98 M88 22 Q84 70 60 97 M69 42 Q78 76 99 96" transform="translate(1653.1,752.6) scale(0.1360)" fill="none" stroke="#8a8a8a" stroke-width="7.7" stroke-linecap="butt"/><path d="M8 10 L18 20 M3 36 L14 45 M5 94 L20 62 M88 5 Q66 14 40 18 M32 36 H98 M65 14 V58 M42 58 H90 V95 H42 Z" transform="translate(1667.9,752.6) scale(0.1360)" fill="none" stroke="#8a8a8a" stroke-width="7.7" stroke-linecap="butt"/><text x="1687.6" y="764.2" style="font-family:'Liberation Sans', sans-serif;font-size:15.2px;letter-spacing:0.55px" fill="#8a8a8a">Windows</text><path d="M18 72 a10 10 0 1 0 0.1 0 Z" transform="translate(1754.3,752.6) scale(0.1360)" fill="none" stroke="#8a8a8a" stroke-width="7.7" stroke-linecap="butt"/></g></svg><div class="hdr">TiDB</div><div class="lh" style="right:1042.5px;top:67.8px">max<span class="caret"></span></div><div class="lh" style="right:1001.7px;top:67.8px">avg</div><div class="lh" style="right:958.4px;top:67.8px">current</div><div class="lg" style="left:670px;top:84px;width:228px;height:187.5px"><div class="lr alt" style="top:0px"><i style="left:9px;background:#CCA300"></i><span class="ll" style="left:26.5px">Insert</span><span class="lv" style="right:93.5px">808</span><span class="lv" style="right:52.7px">304</span><span class="lv" style="right:8.8px">690</span></div><div class="lr" style="top:20px"><i style="left:9px;background:#6D1F62"></i><span class="ll" style="left:26.5px">Set</span><span class="lv" style="right:93.5px">317</span><span class="lv" style="right:52.7px">165</span><span class="lv" style="right:8.8px">202</span></div><div class="lr alt" style="top:40px"><i style="left:9px;background:#6ED0E0"></i><span class="ll" style="left:26.5px">Commit</span><span class="lv" style="right:93.5px">193</span><span class="lv" style="right:52.7px">117</span><span class="lv" style="right:8.8px">139</span></div><div class="lr" style="top:60px"><i style="left:9px;background:#0A437C"></i><span class="ll" style="left:26.5px">Select</span><span class="lv" style="right:93.5px">138</span><span class="lv" style="right:52.7px">68</span><span class="lv" style="right:8.8px">75</span></div><div class="lr alt" style="top:80px"><i style="left:9px;background:#447EBC"></i><span class="ll" style="left:26.5px">Replace</span><span class="lv" style="right:93.5px">31</span><span class="lv" style="right:52.7px">4</span><span class="lv" style="right:8.8px">0</span></div><div class="lr" style="top:100px"><i style="left:9px;background:#705DA0"></i><span class="ll" style="left:26.5px">Explain</span><span class="lv" style="right:93.5px">31</span><span class="lv" style="right:52.7px">17</span><span class="lv" style="right:8.8px">14</span></div><div class="lr alt" style="top:120px"><i style="left:9px;background:#EAB839"></i><span class="ll" style="left:26.5px">Begin</span><span class="lv" style="right:93.5px">22</span><span class="lv" style="right:52.7px">18</span><span class="lv" style="right:8.8px">18</span></div><div class="lr" style="top:140px"><i style="left:9px;background:#F4D598"></i><span class="ll" style="left:26.5px">Update</span><span class="lv" style="right:93.5px">21</span><span class="lv" style="right:52.7px">16</span><span class="lv" style="right:8.8px">16</span></div><div class="lr alt" style="top:160px"><i style="left:9px;background:#584477"></i><span class="ll" style="left:26.5px">Show</span><span class="lv" style="right:93.5px">6</span><span class="lv" style="right:52.7px">0</span><span class="lv" style="right:8.8px">0</span></div><div class="lr" style="top:180px"><i style="left:9px;background:#C15C17"></i><span class="ll" style="left:26.5px">RollBack</span><span class="lv" style="right:93.5px">1</span><span class="lv" style="right:52.7px">1</span><span class="lv" style="right:8.8px">0</span></div></div><div class="sb" style="left:897.3px;top:70px;height:147.5px"></div><i class="chip" style="left:951px;top:262.3px;background:#7EB26D"></i><span class="bl" style="left:965.8px;top:253.6px">999</span><i class="chip" style="left:992px;top:262.3px;background:#EAB839"></i><span class="bl" style="left:1006.9px;top:253.6px">99</span><i class="chip" style="left:1027.2px;top:262.3px;background:#6ED0E0"></i><span class="bl" style="left:1042px;top:253.6px">95</span><i class="chip" style="left:1062.8px;top:262.3px;background:#EF843C"></i><span class="bl" style="left:1077.5px;top:253.6px">80</span><div class="sb" style="left:1820.2px;top:257px;height:15px;border-radius:3px 3px 0 0"></div><div class="lh" style="right:1001.6px;top:319.8px">max</div><div class="lh" style="right:958.4px;top:319.8px">current</div><div class="lg" style="left:580px;top:336px;width:317.5px;height:187.3px"><div class="lr alt" style="top:0px"><i style="left:9px;background:#EF843C"></i><span class="ll" style="left:26.7px"><b>172.16.116.153:10080</b> Query Error</span><span class="lv" style="right:52.1px">1</span><span class="lv" style="right:8.3px">0</span></div><div class="lr" style="top:20px"><i style="left:9px;background:#584477"></i><span class="ll" style="left:26.7px"><b>172.16.116.153:10080</b> Ping OK</span><span class="lv" style="right:52.1px">0</span><span class="lv" style="right:8.3px">0</span></div><div class="lr alt" style="top:40px"><i style="left:9px;background:#B7DBAB"></i><span class="ll" style="left:26.7px"><b>172.16.116.153:10080</b> Query OK</span><span class="lv" style="right:52.1px">415</span><span class="lv" style="right:8.3px">274</span></div><div class="lr" style="top:60px"><i style="left:9px;background:#F4D598"></i><span class="ll" style="left:26.7px"><b>172.16.116.153:10080</b> Quit OK</span><span class="lv" style="right:52.1px">3</span><span class="lv" style="right:8.3px">0</span></div><div class="lr alt" style="top:80px"><i style="left:9px;background:#F29191"></i><span class="ll" style="left:26.7px"><b>172.16.116.153:10080</b> StmtClose OK</span><span class="lv" style="right:52.1px">0</span><span class="lv" style="right:8.3px">0</span></div><div class="lr" style="top:100px"><i style="left:9px;background:#82B5D8"></i><span class="ll" style="left:26.7px"><b>172.16.116.153:10080</b> StmtExecute OK</span><span class="lv" style="right:52.1px">0</span><span class="lv" style="right:8.3px">0</span></div><div class="lr alt" style="top:120px"><i style="left:9px;background:#AEA2E0"></i><span class="ll" style="left:26.7px"><b>172.16.116.153:10080</b> StmtPrepare OK</span><span class="lv" style="right:52.1px">0</span><span class="lv" style="right:8.3px">0</span></div><div class="lr" style="top:140px"><i style="left:9px;background:#962D82"></i><span class="ll" style="left:26.7px"><b>172.16.117.177:10080</b> Query Error</span><span class="lv" style="right:52.1px">23</span><span class="lv" style="right:8.3px">15</span></div><div class="lr alt" style="top:160px"><i style="left:9px;background:#2F575E"></i><span class="ll" style="left:26.7px"><b>172.16.117.177:10080</b> Ping OK</span><span class="lv" style="right:52.1px">0</span><span class="lv" style="right:8.3px">0</span></div><div class="lr" style="top:180px"><i style="left:9px;background:#C15C17"></i><span class="ll" style="left:26.7px"><b>172.16.117.177:10080</b> Query OK</span><span class="lv" style="right:52.1px">570</span><span class="lv" style="right:8.3px">306</span></div></div><div class="sb" style="left:897.2px;top:322px;height:173px"></div><div class="lh" style="right:78.4px;top:319.8px">max</div><div class="lh" style="right:35px;top:319.8px">current</div><div class="lg" style="left:1607px;top:336px;width:212.5px;height:140px"><div class="lr alt" style="top:0px"><i style="left:9.8px;background:#CCA300"></i><span class="ll" style="left:26.8px">kv<b>:1062</b></span><span class="lv" style="right:50.9px">3</span><span class="lv" style="right:6.9px">0</span></div><div class="lr" style="top:20px"><i style="left:9.8px;background:#890F02"></i><span class="ll" style="left:26.8px">parser<b>:1064</b></span><span class="lv" style="right:50.9px">3</span><span class="lv" style="right:6.9px">0</span></div><div class="lr alt" style="top:40px"><i style="left:9.8px;background:#6D1F62"></i><span class="ll" style="left:26.8px">planner<b>:1054</b></span><span class="lv" style="right:50.9px">88</span><span class="lv" style="right:6.9px">21</span></div><div class="lr" style="top:60px"><i style="left:9.8px;background:#F9BA8F"></i><span class="ll" style="left:26.8px">schema<b>:1146</b></span><span class="lv" style="right:50.9px">1.344 K</span><span class="lv" style="right:6.9px">864</span></div><div class="lr alt" style="top:80px"><i style="left:9.8px;background:#F29191"></i><span class="ll" style="left:26.8px">table<b>:1048</b></span><span class="lv" style="right:50.9px">3</span><span class="lv" style="right:6.9px">0</span></div><div class="lr" style="top:100px"><i style="left:9.8px;background:#82B5D8"></i><span class="ll" style="left:26.8px">table<b>:1364</b></span><span class="lv" style="right:50.9px">1</span><span class="lv" style="right:6.9px">0</span></div><div class="lr alt" style="top:120px"><i style="left:9.8px;background:#64B0C8"></i><span class="ll" style="left:26.8px">unknown</span><span class="lv" style="right:50.9px">1</span><span class="lv" style="right:6.9px">0</span></div></div><div class="sb" style="left:1820.2px;top:322px;height:200.5px"></div><div class="lh" style="right:958.4px;top:571.8px">current</div><div class="lg" style="left:701px;top:588px;width:196px;height:60px"><div class="lr alt" style="top:0px"><i style="left:9px;background:#7EB26D"></i><span class="ll" style="left:26.8px"><b>172.16.116.153:10080</b></span><span class="lv" style="right:7.8px">178</span></div><div class="lr" style="top:20px"><i style="left:9px;background:#EAB839"></i><span class="ll" style="left:26.8px"><b>172.16.117.177:10080</b></span><span class="lv" style="right:7.8px">179</span></div><div class="lr alt" style="top:40px"><i style="left:9px;background:#6ED0E0"></i><span class="ll" style="left:26.8px">total</span><span class="lv" style="right:7.8px">357</span></div></div><div class="sb" style="left:897.2px;top:574px;height:201px"></div><div class="lh" style="right:103.2px;top:571.8px">max</div><div class="lh" style="right:34.8px;top:571.8px">current</div><div class="lg" style="left:1476px;top:588px;width:343.5px;height:80px"><div class="lr alt" style="top:0px"><i style="left:10px;background:#7EB26D"></i><span class="ll" style="left:26.7px;letter-spacing:0.05px">process-<b>172.16.116.153:10080</b></span><span class="lv" style="right:75.7px">15.58 GiB</span><span class="lv" style="right:6.7px">14.14 GiB</span></div><div class="lr" style="top:20px"><i style="left:10px;background:#EAB839"></i><span class="ll" style="left:26.7px;letter-spacing:0.05px">process-<b>172.16.117.177:10080</b></span><span class="lv" style="right:75.7px">13.18 GiB</span><span class="lv" style="right:6.7px">8.19 GiB</span></div><div class="lr alt" style="top:40px"><i style="left:10px;background:#6ED0E0"></i><span class="ll" style="left:26.7px;letter-spacing:0.05px">HeapInuse-<b>172.16.116.153:10080</b></span><span class="lv" style="right:75.7px">6.55 GiB</span><span class="lv" style="right:6.7px">3.68 GiB</span></div><div class="lr" style="top:60px"><i style="left:10px;background:#EF843C"></i><span class="ll" style="left:26.7px;letter-spacing:0.05px">HeapInuse-<b>172.16.117.177:10080</b></span><span class="lv" style="right:75.7px">8.06 GiB</span><span class="lv" style="right:6.7px">3.54 GiB</span></div></div><div class="sb" style="left:1820.2px;top:574px;height:200px"></div></div></body></html>
